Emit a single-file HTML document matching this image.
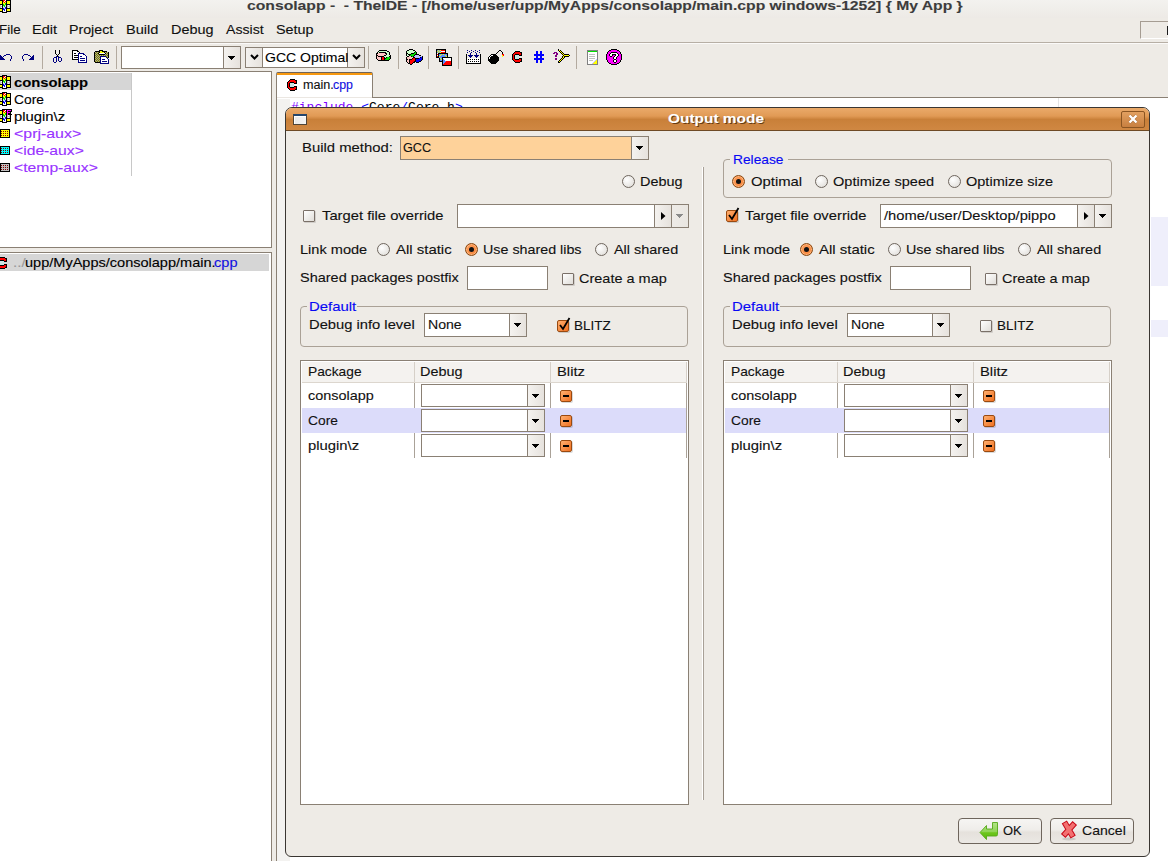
<!DOCTYPE html>
<html><head><meta charset="utf-8"><style>
html,body{margin:0;padding:0}
body{width:1168px;height:861px;overflow:hidden;position:relative;background:#eeebe6;font-family:"Liberation Sans",sans-serif;}
.t{position:absolute;white-space:pre;font-size:14px;line-height:16px;-webkit-text-stroke:0.12px currentColor;}
</style></head><body>

<div style="position:absolute;left:0px;top:0px;width:1168px;height:18px;background:linear-gradient(#f3f2ef,#edeae6)"></div>
<div class="t" style="left:247.39px;top:-2px;color:#3c3c3c;transform:scaleX(1.1632);transform-origin:0 0;font-weight:bold;font-size:13.5px;">consolapp -  - TheIDE - [/home/user/upp/MyApps/consolapp/main.cpp windows-1252] { My App }</div>
<svg style="position:absolute;left:0px;top:-1px" width="11" height="14" shape-rendering="crispEdges"><rect x="2" y="0" width="5" height="1" fill="#000"/><rect x="0" y="1" width="3" height="1" fill="#000"/><rect x="3" y="1" width="2" height="1" fill="#ff0000"/><rect x="5" y="1" width="1" height="1" fill="#fff"/><rect x="6" y="1" width="5" height="1" fill="#000"/><rect x="0" y="2" width="2" height="1" fill="#ffff00"/><rect x="2" y="2" width="1" height="1" fill="#000"/><rect x="3" y="2" width="1" height="1" fill="#ff0000"/><rect x="4" y="2" width="1" height="1" fill="#fff"/><rect x="5" y="2" width="1" height="1" fill="#ff0000"/><rect x="6" y="2" width="1" height="1" fill="#000"/><rect x="7" y="2" width="3" height="1" fill="#ffff00"/><rect x="10" y="2" width="1" height="1" fill="#000"/><rect x="0" y="3" width="2" height="1" fill="#ffff00"/><rect x="2" y="3" width="1" height="1" fill="#000"/><rect x="3" y="3" width="1" height="1" fill="#ffff00"/><rect x="4" y="3" width="1" height="1" fill="#ff0000"/><rect x="5" y="3" width="1" height="1" fill="#ffff00"/><rect x="6" y="3" width="1" height="1" fill="#000"/><rect x="7" y="3" width="3" height="1" fill="#ffff00"/><rect x="10" y="3" width="1" height="1" fill="#000"/><rect x="0" y="4" width="2" height="1" fill="#ffff00"/><rect x="2" y="4" width="1" height="1" fill="#000"/><rect x="3" y="4" width="2" height="1" fill="#ffff00"/><rect x="5" y="4" width="1" height="1" fill="#00e000"/><rect x="6" y="4" width="1" height="1" fill="#000"/><rect x="7" y="4" width="3" height="1" fill="#ffff00"/><rect x="10" y="4" width="1" height="1" fill="#000"/><rect x="0" y="5" width="3" height="1" fill="#000"/><rect x="3" y="5" width="1" height="1" fill="#00e000"/><rect x="4" y="5" width="1" height="1" fill="#ffff00"/><rect x="5" y="5" width="1" height="1" fill="#00e000"/><rect x="6" y="5" width="5" height="1" fill="#000"/><rect x="0" y="6" width="1" height="1" fill="#c0c0c0"/><rect x="1" y="6" width="1" height="1" fill="#fff"/><rect x="2" y="6" width="1" height="1" fill="#000"/><rect x="3" y="6" width="2" height="1" fill="#00e000"/><rect x="5" y="6" width="1" height="1" fill="#c8e4e4"/><rect x="6" y="6" width="1" height="1" fill="#000"/><rect x="7" y="6" width="1" height="1" fill="#c0c0c0"/><rect x="8" y="6" width="1" height="1" fill="#fff"/><rect x="9" y="6" width="1" height="1" fill="#c0c0c0"/><rect x="10" y="6" width="1" height="1" fill="#000"/><rect x="0" y="7" width="2" height="1" fill="#c0c0c0"/><rect x="2" y="7" width="1" height="1" fill="#000"/><rect x="3" y="7" width="1" height="1" fill="#c8e4e4"/><rect x="4" y="7" width="1" height="1" fill="#00e000"/><rect x="5" y="7" width="1" height="1" fill="#c8e4e4"/><rect x="6" y="7" width="1" height="1" fill="#000"/><rect x="7" y="7" width="3" height="1" fill="#c0c0c0"/><rect x="10" y="7" width="1" height="1" fill="#000"/><rect x="0" y="8" width="1" height="1" fill="#c0c0c0"/><rect x="1" y="8" width="1" height="1" fill="#fff"/><rect x="2" y="8" width="1" height="1" fill="#000"/><rect x="3" y="8" width="2" height="1" fill="#c8e4e4"/><rect x="5" y="8" width="1" height="1" fill="#0000ff"/><rect x="6" y="8" width="1" height="1" fill="#000"/><rect x="7" y="8" width="1" height="1" fill="#c0c0c0"/><rect x="8" y="8" width="1" height="1" fill="#fff"/><rect x="9" y="8" width="1" height="1" fill="#c0c0c0"/><rect x="10" y="8" width="1" height="1" fill="#000"/><rect x="0" y="9" width="3" height="1" fill="#000"/><rect x="3" y="9" width="1" height="1" fill="#0000ff"/><rect x="4" y="9" width="1" height="1" fill="#c8e4e4"/><rect x="5" y="9" width="1" height="1" fill="#0000ff"/><rect x="6" y="9" width="5" height="1" fill="#000"/><rect x="0" y="10" width="2" height="1" fill="#ffff00"/><rect x="2" y="10" width="1" height="1" fill="#000"/><rect x="3" y="10" width="2" height="1" fill="#0000ff"/><rect x="5" y="10" width="1" height="1" fill="#fff"/><rect x="6" y="10" width="1" height="1" fill="#000"/><rect x="7" y="10" width="3" height="1" fill="#ffff00"/><rect x="10" y="10" width="1" height="1" fill="#000"/><rect x="0" y="11" width="2" height="1" fill="#ffff00"/><rect x="2" y="11" width="1" height="1" fill="#000"/><rect x="3" y="11" width="1" height="1" fill="#fff"/><rect x="4" y="11" width="1" height="1" fill="#0000ff"/><rect x="5" y="11" width="1" height="1" fill="#fff"/><rect x="6" y="11" width="1" height="1" fill="#000"/><rect x="7" y="11" width="3" height="1" fill="#ffff00"/><rect x="10" y="11" width="1" height="1" fill="#000"/><rect x="0" y="12" width="3" height="1" fill="#000"/><rect x="3" y="12" width="3" height="1" fill="#fff"/><rect x="6" y="12" width="5" height="1" fill="#000"/><rect x="2" y="13" width="5" height="1" fill="#000"/></svg>
<div class="t" style="left:-1.10px;top:22px;color:#101010;transform:scaleX(0.9943);transform-origin:0 0;font-size:13.5px;">File</div>
<div class="t" style="left:31.81px;top:22px;color:#101010;transform:scaleX(1.0765);transform-origin:0 0;font-size:13.5px;">Edit</div>
<div class="t" style="left:68.83px;top:22px;color:#101010;transform:scaleX(1.0527);transform-origin:0 0;font-size:13.5px;">Project</div>
<div class="t" style="left:125.80px;top:22px;color:#101010;transform:scaleX(1.0809);transform-origin:0 0;font-size:13.5px;">Build</div>
<div class="t" style="left:170.82px;top:22px;color:#101010;transform:scaleX(1.0684);transform-origin:0 0;font-size:13.5px;">Debug</div>
<div class="t" style="left:225.97px;top:22px;color:#101010;transform:scaleX(1.0473);transform-origin:0 0;font-size:13.5px;">Assist</div>
<div class="t" style="left:276.35px;top:22px;color:#101010;transform:scaleX(1.0664);transform-origin:0 0;font-size:13.5px;">Setup</div>
<div style="position:absolute;left:0px;top:42px;width:1168px;height:1px;background:#b7afa5"></div>
<div style="position:absolute;left:0px;top:43px;width:1168px;height:1px;background:#fbfaf9"></div>
<div style="position:absolute;left:1140px;top:21px;width:40px;height:18px;border-top:1px solid #a59c92;border-left:1px solid #a59c92;box-sizing:border-box;border-bottom:1px solid #fff"></div>
<div style="position:absolute;left:1167px;top:26px;width:2px;height:9px;background:#1a1a1a"></div>
<div style="position:absolute;left:42px;top:46px;width:1px;height:23px;background:#b3aa9f"></div>
<div style="position:absolute;left:116px;top:46px;width:1px;height:23px;background:#b3aa9f"></div>
<div style="position:absolute;left:368px;top:46px;width:1px;height:23px;background:#b3aa9f"></div>
<div style="position:absolute;left:398px;top:46px;width:1px;height:23px;background:#b3aa9f"></div>
<div style="position:absolute;left:428px;top:46px;width:1px;height:23px;background:#b3aa9f"></div>
<div style="position:absolute;left:458px;top:46px;width:1px;height:23px;background:#b3aa9f"></div>
<div style="position:absolute;left:576px;top:46px;width:1px;height:23px;background:#b3aa9f"></div>
<div style="position:absolute;left:121px;top:46px;width:120px;height:23px;background:#fff;border:1px solid #8a8074;box-sizing:border-box"></div>
<div style="position:absolute;left:223px;top:46px;width:18px;height:23px;background:linear-gradient(90deg,#f4f2ef,#e6e2dd);border:1px solid #8a8074;box-sizing:border-box"></div>
<svg style="position:absolute;left:228px;top:56px" width="7" height="4" shape-rendering="crispEdges"><rect x="0" y="0" width="7" height="1" fill="#000"/><rect x="1" y="1" width="5" height="1" fill="#000"/><rect x="2" y="2" width="3" height="1" fill="#000"/><rect x="3" y="3" width="1" height="1" fill="#000"/></svg>
<div style="position:absolute;left:245px;top:47px;width:120px;height:21px;background:#fff;border:1px solid #8a8074;box-sizing:border-box"></div>
<div style="position:absolute;left:245px;top:47px;width:18px;height:21px;background:linear-gradient(90deg,#f4f2ef,#e6e2dd);border:1px solid #8a8074;box-sizing:border-box"></div>
<div style="position:absolute;left:347px;top:47px;width:18px;height:21px;background:linear-gradient(90deg,#f4f2ef,#e6e2dd);border:1px solid #8a8074;box-sizing:border-box"></div>
<svg style="position:absolute;left:250px;top:53px" width="9" height="8" viewBox="0 0 9 8"><path d="M1 2 L4.5 5.5 L8 2" fill="none" stroke="#000" stroke-width="2"/></svg>
<svg style="position:absolute;left:352px;top:53px" width="9" height="8" viewBox="0 0 9 8"><path d="M1 2 L4.5 5.5 L8 2" fill="none" stroke="#000" stroke-width="2"/></svg>
<div style="position:absolute;left:263px;top:48px;width:85px;height:19px;overflow:hidden">
<div class="t" style="left:2.29px;top:2px;color:#000;transform:scaleX(1.0384);transform-origin:0 0;font-size:13.5px;">GCC Optimal</div>
</div>
<svg style="position:absolute;left:0px;top:54px" width="12" height="7" shape-rendering="crispEdges"><rect x="6" y="0" width="4" height="1" fill="#000080"/><rect x="0" y="1" width="1" height="1" fill="#000080"/><rect x="4" y="1" width="2" height="1" fill="#000080"/><rect x="10" y="1" width="1" height="1" fill="#000080"/><rect x="0" y="2" width="2" height="1" fill="#000080"/><rect x="3" y="2" width="1" height="1" fill="#000080"/><rect x="11" y="2" width="1" height="1" fill="#000080"/><rect x="0" y="3" width="3" height="1" fill="#000080"/><rect x="11" y="3" width="1" height="1" fill="#000080"/><rect x="0" y="4" width="4" height="1" fill="#000080"/><rect x="11" y="4" width="1" height="1" fill="#000080"/><rect x="0" y="5" width="5" height="1" fill="#000080"/><rect x="10" y="5" width="1" height="1" fill="#000080"/><rect x="10" y="6" width="1" height="1" fill="#000080"/></svg>
<svg style="position:absolute;left:22px;top:54px" width="12" height="7" shape-rendering="crispEdges"><rect x="2" y="0" width="4" height="1" fill="#000080"/><rect x="1" y="1" width="1" height="1" fill="#000080"/><rect x="6" y="1" width="2" height="1" fill="#000080"/><rect x="11" y="1" width="1" height="1" fill="#000080"/><rect x="0" y="2" width="1" height="1" fill="#000080"/><rect x="8" y="2" width="1" height="1" fill="#000080"/><rect x="10" y="2" width="2" height="1" fill="#000080"/><rect x="0" y="3" width="1" height="1" fill="#000080"/><rect x="9" y="3" width="3" height="1" fill="#000080"/><rect x="0" y="4" width="1" height="1" fill="#000080"/><rect x="8" y="4" width="4" height="1" fill="#000080"/><rect x="1" y="5" width="1" height="1" fill="#000080"/><rect x="7" y="5" width="5" height="1" fill="#000080"/><rect x="1" y="6" width="1" height="1" fill="#000080"/></svg>
<svg style="position:absolute;left:53px;top:50px" width="9" height="13" shape-rendering="crispEdges"><rect x="2" y="0" width="1" height="1" fill="#000"/><rect x="6" y="0" width="1" height="1" fill="#000"/><rect x="2" y="1" width="1" height="1" fill="#000"/><rect x="6" y="1" width="1" height="1" fill="#000"/><rect x="2" y="2" width="1" height="1" fill="#000"/><rect x="6" y="2" width="1" height="1" fill="#000"/><rect x="2" y="3" width="1" height="1" fill="#000"/><rect x="6" y="3" width="1" height="1" fill="#000"/><rect x="3" y="4" width="1" height="1" fill="#000"/><rect x="5" y="4" width="1" height="1" fill="#000"/><rect x="4" y="5" width="1" height="1" fill="#000"/><rect x="3" y="6" width="1" height="1" fill="#000080"/><rect x="4" y="6" width="1" height="1" fill="#000"/><rect x="5" y="6" width="1" height="1" fill="#000080"/><rect x="1" y="7" width="3" height="1" fill="#000080"/><rect x="5" y="7" width="3" height="1" fill="#000080"/><rect x="0" y="8" width="1" height="1" fill="#000080"/><rect x="3" y="8" width="1" height="1" fill="#000080"/><rect x="5" y="8" width="1" height="1" fill="#000080"/><rect x="8" y="8" width="1" height="1" fill="#000080"/><rect x="0" y="9" width="1" height="1" fill="#000080"/><rect x="3" y="9" width="1" height="1" fill="#000080"/><rect x="5" y="9" width="1" height="1" fill="#000080"/><rect x="8" y="9" width="1" height="1" fill="#000080"/><rect x="0" y="10" width="1" height="1" fill="#000080"/><rect x="3" y="10" width="1" height="1" fill="#000080"/><rect x="5" y="10" width="1" height="1" fill="#000080"/><rect x="8" y="10" width="1" height="1" fill="#000080"/><rect x="0" y="11" width="1" height="1" fill="#000080"/><rect x="3" y="11" width="1" height="1" fill="#000080"/><rect x="6" y="11" width="2" height="1" fill="#000080"/><rect x="1" y="12" width="2" height="1" fill="#000080"/></svg>
<svg style="position:absolute;left:72px;top:50px" width="15" height="13" shape-rendering="crispEdges"><rect x="0" y="0" width="6" height="1" fill="#000"/><rect x="0" y="1" width="1" height="1" fill="#000"/><rect x="1" y="1" width="4" height="1" fill="#fff"/><rect x="5" y="1" width="2" height="1" fill="#000"/><rect x="0" y="2" width="1" height="1" fill="#000"/><rect x="1" y="2" width="6" height="1" fill="#fff"/><rect x="7" y="2" width="1" height="1" fill="#000"/><rect x="0" y="3" width="1" height="1" fill="#000"/><rect x="1" y="3" width="1" height="1" fill="#fff"/><rect x="2" y="3" width="2" height="1" fill="#000"/><rect x="4" y="3" width="2" height="1" fill="#fff"/><rect x="6" y="3" width="6" height="1" fill="#000080"/><rect x="0" y="4" width="1" height="1" fill="#000"/><rect x="1" y="4" width="5" height="1" fill="#fff"/><rect x="6" y="4" width="1" height="1" fill="#000080"/><rect x="7" y="4" width="4" height="1" fill="#fff"/><rect x="11" y="4" width="2" height="1" fill="#000080"/><rect x="0" y="5" width="1" height="1" fill="#000"/><rect x="1" y="5" width="1" height="1" fill="#fff"/><rect x="2" y="5" width="4" height="1" fill="#000"/><rect x="6" y="5" width="1" height="1" fill="#000080"/><rect x="7" y="5" width="6" height="1" fill="#fff"/><rect x="13" y="5" width="1" height="1" fill="#000080"/><rect x="0" y="6" width="1" height="1" fill="#000"/><rect x="1" y="6" width="5" height="1" fill="#fff"/><rect x="6" y="6" width="1" height="1" fill="#000080"/><rect x="7" y="6" width="1" height="1" fill="#fff"/><rect x="8" y="6" width="2" height="1" fill="#000080"/><rect x="10" y="6" width="4" height="1" fill="#fff"/><rect x="14" y="6" width="1" height="1" fill="#000080"/><rect x="0" y="7" width="1" height="1" fill="#000"/><rect x="1" y="7" width="1" height="1" fill="#fff"/><rect x="2" y="7" width="4" height="1" fill="#000"/><rect x="6" y="7" width="1" height="1" fill="#000080"/><rect x="7" y="7" width="7" height="1" fill="#fff"/><rect x="14" y="7" width="1" height="1" fill="#000080"/><rect x="0" y="8" width="1" height="1" fill="#000"/><rect x="1" y="8" width="5" height="1" fill="#fff"/><rect x="6" y="8" width="1" height="1" fill="#000080"/><rect x="7" y="8" width="1" height="1" fill="#fff"/><rect x="8" y="8" width="5" height="1" fill="#000080"/><rect x="13" y="8" width="1" height="1" fill="#fff"/><rect x="14" y="8" width="1" height="1" fill="#000080"/><rect x="0" y="9" width="6" height="1" fill="#000"/><rect x="6" y="9" width="1" height="1" fill="#000080"/><rect x="7" y="9" width="7" height="1" fill="#fff"/><rect x="14" y="9" width="1" height="1" fill="#000080"/><rect x="6" y="10" width="1" height="1" fill="#000080"/><rect x="7" y="10" width="1" height="1" fill="#fff"/><rect x="8" y="10" width="5" height="1" fill="#000080"/><rect x="13" y="10" width="1" height="1" fill="#fff"/><rect x="14" y="10" width="1" height="1" fill="#000080"/><rect x="6" y="11" width="1" height="1" fill="#000080"/><rect x="7" y="11" width="7" height="1" fill="#fff"/><rect x="14" y="11" width="1" height="1" fill="#000080"/><rect x="6" y="12" width="9" height="1" fill="#000080"/></svg>
<svg style="position:absolute;left:94px;top:50px" width="15" height="14" shape-rendering="crispEdges"><rect x="5" y="0" width="4" height="1" fill="#000"/><rect x="1" y="1" width="5" height="1" fill="#000"/><rect x="6" y="1" width="2" height="1" fill="#ffff00"/><rect x="8" y="1" width="5" height="1" fill="#000"/><rect x="0" y="2" width="1" height="1" fill="#000"/><rect x="1" y="2" width="1" height="1" fill="#a8a890"/><rect x="2" y="2" width="1" height="1" fill="#808000"/><rect x="3" y="2" width="1" height="1" fill="#a8a890"/><rect x="4" y="2" width="1" height="1" fill="#808000"/><rect x="5" y="2" width="1" height="1" fill="#000"/><rect x="6" y="2" width="4" height="1" fill="#ffff00"/><rect x="10" y="2" width="1" height="1" fill="#000"/><rect x="11" y="2" width="1" height="1" fill="#a8a890"/><rect x="12" y="2" width="1" height="1" fill="#808000"/><rect x="13" y="2" width="1" height="1" fill="#a8a890"/><rect x="14" y="2" width="1" height="1" fill="#000"/><rect x="0" y="3" width="1" height="1" fill="#000"/><rect x="1" y="3" width="1" height="1" fill="#808000"/><rect x="2" y="3" width="1" height="1" fill="#a8a890"/><rect x="3" y="3" width="1" height="1" fill="#808000"/><rect x="4" y="3" width="1" height="1" fill="#000"/><rect x="5" y="3" width="6" height="1" fill="#fff"/><rect x="11" y="3" width="1" height="1" fill="#000"/><rect x="12" y="3" width="1" height="1" fill="#a8a890"/><rect x="13" y="3" width="1" height="1" fill="#808000"/><rect x="14" y="3" width="1" height="1" fill="#000"/><rect x="0" y="4" width="1" height="1" fill="#000"/><rect x="1" y="4" width="1" height="1" fill="#a8a890"/><rect x="2" y="4" width="1" height="1" fill="#808000"/><rect x="3" y="4" width="1" height="1" fill="#a8a890"/><rect x="4" y="4" width="1" height="1" fill="#808000"/><rect x="5" y="4" width="6" height="1" fill="#000"/><rect x="11" y="4" width="1" height="1" fill="#a8a890"/><rect x="12" y="4" width="1" height="1" fill="#808000"/><rect x="13" y="4" width="1" height="1" fill="#a8a890"/><rect x="14" y="4" width="1" height="1" fill="#000"/><rect x="0" y="5" width="1" height="1" fill="#000"/><rect x="1" y="5" width="1" height="1" fill="#808000"/><rect x="2" y="5" width="1" height="1" fill="#a8a890"/><rect x="3" y="5" width="1" height="1" fill="#808000"/><rect x="4" y="5" width="1" height="1" fill="#a8a890"/><rect x="5" y="5" width="1" height="1" fill="#808000"/><rect x="6" y="5" width="1" height="1" fill="#a8a890"/><rect x="7" y="5" width="1" height="1" fill="#808000"/><rect x="8" y="5" width="1" height="1" fill="#a8a890"/><rect x="9" y="5" width="1" height="1" fill="#808000"/><rect x="10" y="5" width="1" height="1" fill="#a8a890"/><rect x="11" y="5" width="1" height="1" fill="#808000"/><rect x="12" y="5" width="1" height="1" fill="#a8a890"/><rect x="13" y="5" width="1" height="1" fill="#808000"/><rect x="14" y="5" width="1" height="1" fill="#000"/><rect x="0" y="6" width="1" height="1" fill="#000"/><rect x="1" y="6" width="1" height="1" fill="#a8a890"/><rect x="2" y="6" width="1" height="1" fill="#808000"/><rect x="3" y="6" width="1" height="1" fill="#a8a890"/><rect x="4" y="6" width="1" height="1" fill="#808000"/><rect x="5" y="6" width="1" height="1" fill="#a8a890"/><rect x="6" y="6" width="6" height="1" fill="#000080"/><rect x="12" y="6" width="1" height="1" fill="#808000"/><rect x="13" y="6" width="1" height="1" fill="#a8a890"/><rect x="14" y="6" width="1" height="1" fill="#000"/><rect x="0" y="7" width="1" height="1" fill="#000"/><rect x="1" y="7" width="1" height="1" fill="#808000"/><rect x="2" y="7" width="1" height="1" fill="#a8a890"/><rect x="3" y="7" width="1" height="1" fill="#808000"/><rect x="4" y="7" width="1" height="1" fill="#a8a890"/><rect x="5" y="7" width="1" height="1" fill="#808000"/><rect x="6" y="7" width="1" height="1" fill="#000080"/><rect x="7" y="7" width="5" height="1" fill="#fff"/><rect x="12" y="7" width="1" height="1" fill="#000080"/><rect x="13" y="7" width="1" height="1" fill="#808000"/><rect x="14" y="7" width="1" height="1" fill="#000"/><rect x="0" y="8" width="1" height="1" fill="#000"/><rect x="1" y="8" width="1" height="1" fill="#a8a890"/><rect x="2" y="8" width="1" height="1" fill="#808000"/><rect x="3" y="8" width="1" height="1" fill="#a8a890"/><rect x="4" y="8" width="1" height="1" fill="#808000"/><rect x="5" y="8" width="1" height="1" fill="#a8a890"/><rect x="6" y="8" width="1" height="1" fill="#000080"/><rect x="7" y="8" width="6" height="1" fill="#fff"/><rect x="13" y="8" width="1" height="1" fill="#000080"/><rect x="0" y="9" width="1" height="1" fill="#000"/><rect x="1" y="9" width="1" height="1" fill="#808000"/><rect x="2" y="9" width="1" height="1" fill="#a8a890"/><rect x="3" y="9" width="1" height="1" fill="#808000"/><rect x="4" y="9" width="1" height="1" fill="#a8a890"/><rect x="5" y="9" width="1" height="1" fill="#808000"/><rect x="6" y="9" width="1" height="1" fill="#000080"/><rect x="7" y="9" width="1" height="1" fill="#fff"/><rect x="8" y="9" width="3" height="1" fill="#000080"/><rect x="11" y="9" width="3" height="1" fill="#fff"/><rect x="14" y="9" width="1" height="1" fill="#000080"/><rect x="0" y="10" width="1" height="1" fill="#000"/><rect x="1" y="10" width="1" height="1" fill="#a8a890"/><rect x="2" y="10" width="1" height="1" fill="#808000"/><rect x="3" y="10" width="1" height="1" fill="#a8a890"/><rect x="4" y="10" width="1" height="1" fill="#808000"/><rect x="5" y="10" width="1" height="1" fill="#a8a890"/><rect x="6" y="10" width="1" height="1" fill="#000080"/><rect x="7" y="10" width="7" height="1" fill="#fff"/><rect x="14" y="10" width="1" height="1" fill="#000080"/><rect x="0" y="11" width="1" height="1" fill="#000"/><rect x="1" y="11" width="1" height="1" fill="#808000"/><rect x="2" y="11" width="1" height="1" fill="#a8a890"/><rect x="3" y="11" width="1" height="1" fill="#808000"/><rect x="4" y="11" width="1" height="1" fill="#a8a890"/><rect x="5" y="11" width="1" height="1" fill="#808000"/><rect x="6" y="11" width="1" height="1" fill="#000080"/><rect x="7" y="11" width="1" height="1" fill="#fff"/><rect x="8" y="11" width="5" height="1" fill="#000080"/><rect x="13" y="11" width="1" height="1" fill="#fff"/><rect x="14" y="11" width="1" height="1" fill="#000080"/><rect x="1" y="12" width="5" height="1" fill="#000"/><rect x="6" y="12" width="1" height="1" fill="#000080"/><rect x="7" y="12" width="7" height="1" fill="#fff"/><rect x="14" y="12" width="1" height="1" fill="#000080"/><rect x="6" y="13" width="9" height="1" fill="#000080"/></svg>
<svg style="position:absolute;left:376px;top:50px" width="16" height="11" shape-rendering="crispEdges"><rect x="3" y="0" width="8" height="1" fill="#000"/><rect x="2" y="1" width="1" height="1" fill="#000"/><rect x="3" y="1" width="8" height="1" fill="#ccffcc"/><rect x="11" y="1" width="2" height="1" fill="#000"/><rect x="1" y="2" width="1" height="1" fill="#000"/><rect x="2" y="2" width="1" height="1" fill="#ccffcc"/><rect x="3" y="2" width="7" height="1" fill="#000"/><rect x="10" y="2" width="3" height="1" fill="#ccffcc"/><rect x="13" y="2" width="1" height="1" fill="#000"/><rect x="0" y="3" width="2" height="1" fill="#000"/><rect x="2" y="3" width="7" height="1" fill="#ffc4c4"/><rect x="9" y="3" width="2" height="1" fill="#000"/><rect x="11" y="3" width="2" height="1" fill="#ccffcc"/><rect x="13" y="3" width="1" height="1" fill="#000"/><rect x="0" y="4" width="1" height="1" fill="#000"/><rect x="1" y="4" width="9" height="1" fill="#ffc4c4"/><rect x="10" y="4" width="1" height="1" fill="#000"/><rect x="11" y="4" width="2" height="1" fill="#ccffcc"/><rect x="13" y="4" width="1" height="1" fill="#000"/><rect x="0" y="5" width="2" height="1" fill="#000"/><rect x="2" y="5" width="6" height="1" fill="#ffc4c4"/><rect x="8" y="5" width="2" height="1" fill="#000"/><rect x="10" y="5" width="4" height="1" fill="#ccffcc"/><rect x="14" y="5" width="1" height="1" fill="#000"/><rect x="0" y="6" width="1" height="1" fill="#000"/><rect x="1" y="6" width="1" height="1" fill="#ffc4c4"/><rect x="2" y="6" width="6" height="1" fill="#000"/><rect x="8" y="6" width="5" height="1" fill="#ccffcc"/><rect x="13" y="6" width="2" height="1" fill="#000"/><rect x="0" y="7" width="1" height="1" fill="#000"/><rect x="1" y="7" width="4" height="1" fill="#ffc4c4"/><rect x="5" y="7" width="1" height="1" fill="#000"/><rect x="6" y="7" width="2" height="1" fill="#ff0000"/><rect x="8" y="7" width="1" height="1" fill="#000"/><rect x="9" y="7" width="1" height="1" fill="#ccffcc"/><rect x="10" y="7" width="1" height="1" fill="#000"/><rect x="11" y="7" width="3" height="1" fill="#00e000"/><rect x="14" y="7" width="1" height="1" fill="#000"/><rect x="0" y="8" width="1" height="1" fill="#000"/><rect x="1" y="8" width="4" height="1" fill="#ffc4c4"/><rect x="5" y="8" width="1" height="1" fill="#000"/><rect x="6" y="8" width="2" height="1" fill="#ff0000"/><rect x="8" y="8" width="2" height="1" fill="#000"/><rect x="10" y="8" width="4" height="1" fill="#00e000"/><rect x="14" y="8" width="1" height="1" fill="#000"/><rect x="1" y="9" width="1" height="1" fill="#000"/><rect x="2" y="9" width="3" height="1" fill="#ffc4c4"/><rect x="5" y="9" width="1" height="1" fill="#000"/><rect x="6" y="9" width="2" height="1" fill="#ff0000"/><rect x="8" y="9" width="1" height="1" fill="#000"/><rect x="9" y="9" width="4" height="1" fill="#00e000"/><rect x="13" y="9" width="1" height="1" fill="#000"/><rect x="2" y="10" width="11" height="1" fill="#000"/></svg>
<svg style="position:absolute;left:406px;top:49px" width="17" height="16" shape-rendering="crispEdges"><rect x="3" y="0" width="4" height="1" fill="#000"/><rect x="1" y="1" width="2" height="1" fill="#000"/><rect x="3" y="1" width="4" height="1" fill="#ccffcc"/><rect x="7" y="1" width="2" height="1" fill="#000"/><rect x="0" y="2" width="1" height="1" fill="#000"/><rect x="1" y="2" width="8" height="1" fill="#ccffcc"/><rect x="9" y="2" width="1" height="1" fill="#000"/><rect x="0" y="3" width="1" height="1" fill="#000"/><rect x="1" y="3" width="7" height="1" fill="#ccffcc"/><rect x="8" y="3" width="1" height="1" fill="#000"/><rect x="9" y="3" width="1" height="1" fill="#00e000"/><rect x="10" y="3" width="1" height="1" fill="#000"/><rect x="0" y="4" width="2" height="1" fill="#000"/><rect x="2" y="4" width="3" height="1" fill="#ccffcc"/><rect x="5" y="4" width="3" height="1" fill="#000"/><rect x="8" y="4" width="2" height="1" fill="#00e000"/><rect x="10" y="4" width="1" height="1" fill="#000"/><rect x="0" y="5" width="1" height="1" fill="#000"/><rect x="1" y="5" width="1" height="1" fill="#ccffcc"/><rect x="2" y="5" width="3" height="1" fill="#000"/><rect x="5" y="5" width="4" height="1" fill="#00e000"/><rect x="9" y="5" width="4" height="1" fill="#000"/><rect x="0" y="6" width="1" height="1" fill="#000"/><rect x="1" y="6" width="2" height="1" fill="#ccffcc"/><rect x="3" y="6" width="1" height="1" fill="#000"/><rect x="4" y="6" width="4" height="1" fill="#00e000"/><rect x="8" y="6" width="1" height="1" fill="#000"/><rect x="9" y="6" width="4" height="1" fill="#c0c0ff"/><rect x="13" y="6" width="2" height="1" fill="#000"/><rect x="1" y="7" width="2" height="1" fill="#000"/><rect x="3" y="7" width="2" height="1" fill="#ffc4c4"/><rect x="5" y="7" width="1" height="1" fill="#000"/><rect x="6" y="7" width="1" height="1" fill="#00e000"/><rect x="7" y="7" width="1" height="1" fill="#000"/><rect x="8" y="7" width="8" height="1" fill="#c0c0ff"/><rect x="16" y="7" width="1" height="1" fill="#000"/><rect x="0" y="8" width="1" height="1" fill="#000"/><rect x="1" y="8" width="6" height="1" fill="#ffc4c4"/><rect x="7" y="8" width="2" height="1" fill="#000"/><rect x="9" y="8" width="5" height="1" fill="#c0c0ff"/><rect x="14" y="8" width="1" height="1" fill="#000"/><rect x="15" y="8" width="1" height="1" fill="#0000ff"/><rect x="16" y="8" width="1" height="1" fill="#000"/><rect x="0" y="9" width="1" height="1" fill="#000"/><rect x="1" y="9" width="5" height="1" fill="#ffc4c4"/><rect x="6" y="9" width="1" height="1" fill="#000"/><rect x="7" y="9" width="2" height="1" fill="#ff0000"/><rect x="9" y="9" width="4" height="1" fill="#000"/><rect x="13" y="9" width="3" height="1" fill="#0000ff"/><rect x="16" y="9" width="1" height="1" fill="#000"/><rect x="0" y="10" width="2" height="1" fill="#000"/><rect x="2" y="10" width="1" height="1" fill="#ffc4c4"/><rect x="3" y="10" width="3" height="1" fill="#000"/><rect x="6" y="10" width="3" height="1" fill="#ff0000"/><rect x="9" y="10" width="1" height="1" fill="#000"/><rect x="10" y="10" width="6" height="1" fill="#0000ff"/><rect x="16" y="10" width="1" height="1" fill="#000"/><rect x="0" y="11" width="1" height="1" fill="#000"/><rect x="1" y="11" width="2" height="1" fill="#ffc4c4"/><rect x="3" y="11" width="1" height="1" fill="#000"/><rect x="4" y="11" width="5" height="1" fill="#ff0000"/><rect x="9" y="11" width="1" height="1" fill="#000"/><rect x="10" y="11" width="5" height="1" fill="#0000ff"/><rect x="15" y="11" width="1" height="1" fill="#000"/><rect x="0" y="12" width="1" height="1" fill="#000"/><rect x="1" y="12" width="2" height="1" fill="#ffc4c4"/><rect x="3" y="12" width="1" height="1" fill="#000"/><rect x="4" y="12" width="4" height="1" fill="#ff0000"/><rect x="8" y="12" width="2" height="1" fill="#000"/><rect x="10" y="12" width="3" height="1" fill="#0000ff"/><rect x="13" y="12" width="2" height="1" fill="#000"/><rect x="1" y="13" width="1" height="1" fill="#000"/><rect x="2" y="13" width="1" height="1" fill="#ffc4c4"/><rect x="3" y="13" width="1" height="1" fill="#000"/><rect x="4" y="13" width="3" height="1" fill="#ff0000"/><rect x="7" y="13" width="2" height="1" fill="#000"/><rect x="10" y="13" width="3" height="1" fill="#000"/><rect x="2" y="14" width="2" height="1" fill="#000"/><rect x="4" y="14" width="2" height="1" fill="#ff0000"/><rect x="6" y="14" width="1" height="1" fill="#000"/><rect x="4" y="15" width="2" height="1" fill="#000"/></svg>
<svg style="position:absolute;left:436px;top:49px" width="16" height="17" shape-rendering="crispEdges"><rect x="0" y="0" width="10" height="1" fill="#000"/><rect x="0" y="1" width="1" height="1" fill="#000"/><rect x="1" y="1" width="1" height="1" fill="#5a8cff"/><rect x="2" y="1" width="1" height="1" fill="#ffff00"/><rect x="3" y="1" width="1" height="1" fill="#5a8cff"/><rect x="4" y="1" width="1" height="1" fill="#ffff00"/><rect x="5" y="1" width="4" height="1" fill="#ff0000"/><rect x="9" y="1" width="1" height="1" fill="#000"/><rect x="0" y="2" width="1" height="1" fill="#000"/><rect x="1" y="2" width="1" height="1" fill="#ffff00"/><rect x="2" y="2" width="1" height="1" fill="#5a8cff"/><rect x="3" y="2" width="1" height="1" fill="#ffff00"/><rect x="4" y="2" width="1" height="1" fill="#5a8cff"/><rect x="5" y="2" width="4" height="1" fill="#fff"/><rect x="9" y="2" width="1" height="1" fill="#000"/><rect x="0" y="3" width="1" height="1" fill="#000"/><rect x="1" y="3" width="1" height="1" fill="#5a8cff"/><rect x="2" y="3" width="1" height="1" fill="#ffff00"/><rect x="3" y="3" width="1" height="1" fill="#5a8cff"/><rect x="4" y="3" width="1" height="1" fill="#ffff00"/><rect x="5" y="3" width="4" height="1" fill="#ff0000"/><rect x="9" y="3" width="1" height="1" fill="#000"/><rect x="0" y="4" width="1" height="1" fill="#000"/><rect x="1" y="4" width="1" height="1" fill="#fff"/><rect x="2" y="4" width="10" height="1" fill="#000"/><rect x="0" y="5" width="1" height="1" fill="#000"/><rect x="1" y="5" width="1" height="1" fill="#ff0000"/><rect x="2" y="5" width="1" height="1" fill="#000"/><rect x="3" y="5" width="2" height="1" fill="#5a8cff"/><rect x="5" y="5" width="1" height="1" fill="#ffff00"/><rect x="6" y="5" width="1" height="1" fill="#5a8cff"/><rect x="7" y="5" width="1" height="1" fill="#ffff00"/><rect x="8" y="5" width="3" height="1" fill="#5a8cff"/><rect x="11" y="5" width="1" height="1" fill="#000"/><rect x="0" y="6" width="1" height="1" fill="#000"/><rect x="1" y="6" width="1" height="1" fill="#fff"/><rect x="2" y="6" width="1" height="1" fill="#000"/><rect x="3" y="6" width="1" height="1" fill="#5a8cff"/><rect x="4" y="6" width="1" height="1" fill="#ffff00"/><rect x="5" y="6" width="4" height="1" fill="#5a8cff"/><rect x="9" y="6" width="1" height="1" fill="#ffff00"/><rect x="10" y="6" width="1" height="1" fill="#5a8cff"/><rect x="11" y="6" width="1" height="1" fill="#000"/><rect x="0" y="7" width="1" height="1" fill="#000"/><rect x="1" y="7" width="1" height="1" fill="#ff0000"/><rect x="2" y="7" width="1" height="1" fill="#000"/><rect x="3" y="7" width="1" height="1" fill="#ffff00"/><rect x="4" y="7" width="6" height="1" fill="#5a8cff"/><rect x="10" y="7" width="1" height="1" fill="#ffff00"/><rect x="11" y="7" width="1" height="1" fill="#000"/><rect x="0" y="8" width="3" height="1" fill="#000"/><rect x="3" y="8" width="3" height="1" fill="#5a8cff"/><rect x="6" y="8" width="10" height="1" fill="#000"/><rect x="3" y="9" width="1" height="1" fill="#000"/><rect x="4" y="9" width="1" height="1" fill="#ffff00"/><rect x="5" y="9" width="1" height="1" fill="#5a8cff"/><rect x="6" y="9" width="1" height="1" fill="#000"/><rect x="7" y="9" width="8" height="1" fill="#fff"/><rect x="15" y="9" width="1" height="1" fill="#000"/><rect x="3" y="10" width="1" height="1" fill="#000"/><rect x="4" y="10" width="1" height="1" fill="#5a8cff"/><rect x="5" y="10" width="1" height="1" fill="#ffff00"/><rect x="6" y="10" width="1" height="1" fill="#000"/><rect x="7" y="10" width="1" height="1" fill="#5a8cff"/><rect x="8" y="10" width="7" height="1" fill="#fff"/><rect x="15" y="10" width="1" height="1" fill="#000"/><rect x="3" y="11" width="1" height="1" fill="#000"/><rect x="4" y="11" width="2" height="1" fill="#5a8cff"/><rect x="6" y="11" width="1" height="1" fill="#000"/><rect x="7" y="11" width="2" height="1" fill="#5a8cff"/><rect x="9" y="11" width="6" height="1" fill="#fff"/><rect x="15" y="11" width="1" height="1" fill="#000"/><rect x="3" y="12" width="4" height="1" fill="#000"/><rect x="7" y="12" width="3" height="1" fill="#5a8cff"/><rect x="10" y="12" width="5" height="1" fill="#ff0000"/><rect x="15" y="12" width="1" height="1" fill="#000"/><rect x="6" y="13" width="1" height="1" fill="#000"/><rect x="7" y="13" width="2" height="1" fill="#5a8cff"/><rect x="9" y="13" width="6" height="1" fill="#ff0000"/><rect x="15" y="13" width="1" height="1" fill="#000"/><rect x="6" y="14" width="1" height="1" fill="#000"/><rect x="7" y="14" width="1" height="1" fill="#5a8cff"/><rect x="8" y="14" width="7" height="1" fill="#ff0000"/><rect x="15" y="14" width="1" height="1" fill="#000"/><rect x="6" y="15" width="1" height="1" fill="#000"/><rect x="7" y="15" width="8" height="1" fill="#ff0000"/><rect x="15" y="15" width="1" height="1" fill="#000"/><rect x="6" y="16" width="10" height="1" fill="#000"/></svg>
<svg style="position:absolute;left:466px;top:50px" width="16" height="14" shape-rendering="crispEdges"><rect x="1" y="0" width="1" height="1" fill="#000080"/><rect x="5" y="0" width="1" height="1" fill="#000080"/><rect x="9" y="0" width="1" height="1" fill="#000080"/><rect x="13" y="0" width="1" height="1" fill="#000080"/><rect x="3" y="1" width="1" height="1" fill="#000080"/><rect x="7" y="1" width="1" height="1" fill="#000080"/><rect x="11" y="1" width="1" height="1" fill="#000080"/><rect x="1" y="2" width="1" height="1" fill="#000080"/><rect x="5" y="2" width="1" height="1" fill="#000080"/><rect x="9" y="2" width="1" height="1" fill="#000080"/><rect x="13" y="2" width="1" height="1" fill="#000080"/><rect x="4" y="3" width="1" height="1" fill="#000080"/><rect x="10" y="3" width="1" height="1" fill="#000080"/><rect x="0" y="4" width="1" height="1" fill="#000"/><rect x="4" y="4" width="1" height="1" fill="#000080"/><rect x="10" y="4" width="1" height="1" fill="#000080"/><rect x="14" y="4" width="1" height="1" fill="#000"/><rect x="0" y="5" width="1" height="1" fill="#000"/><rect x="2" y="5" width="5" height="1" fill="#000080"/><rect x="8" y="5" width="5" height="1" fill="#000080"/><rect x="14" y="5" width="1" height="1" fill="#000"/><rect x="0" y="6" width="1" height="1" fill="#000"/><rect x="3" y="6" width="3" height="1" fill="#000080"/><rect x="9" y="6" width="3" height="1" fill="#000080"/><rect x="14" y="6" width="1" height="1" fill="#000"/><rect x="0" y="7" width="1" height="1" fill="#000"/><rect x="4" y="7" width="1" height="1" fill="#000080"/><rect x="10" y="7" width="1" height="1" fill="#000080"/><rect x="14" y="7" width="1" height="1" fill="#000"/><rect x="0" y="8" width="1" height="1" fill="#000"/><rect x="1" y="8" width="13" height="1" fill="#fff"/><rect x="14" y="8" width="1" height="1" fill="#000"/><rect x="0" y="9" width="1" height="1" fill="#000"/><rect x="1" y="9" width="1" height="1" fill="#fff"/><rect x="2" y="9" width="1" height="1" fill="#000"/><rect x="3" y="9" width="1" height="1" fill="#fff"/><rect x="4" y="9" width="1" height="1" fill="#000"/><rect x="5" y="9" width="1" height="1" fill="#fff"/><rect x="6" y="9" width="1" height="1" fill="#000"/><rect x="7" y="9" width="1" height="1" fill="#fff"/><rect x="8" y="9" width="1" height="1" fill="#000"/><rect x="9" y="9" width="1" height="1" fill="#fff"/><rect x="10" y="9" width="1" height="1" fill="#000"/><rect x="11" y="9" width="1" height="1" fill="#fff"/><rect x="12" y="9" width="1" height="1" fill="#000"/><rect x="13" y="9" width="1" height="1" fill="#fff"/><rect x="14" y="9" width="1" height="1" fill="#000"/><rect x="0" y="10" width="1" height="1" fill="#000"/><rect x="1" y="10" width="13" height="1" fill="#fff"/><rect x="14" y="10" width="1" height="1" fill="#000"/><rect x="0" y="11" width="1" height="1" fill="#000"/><rect x="1" y="11" width="1" height="1" fill="#fff"/><rect x="2" y="11" width="1" height="1" fill="#000"/><rect x="3" y="11" width="1" height="1" fill="#fff"/><rect x="4" y="11" width="1" height="1" fill="#000"/><rect x="5" y="11" width="1" height="1" fill="#fff"/><rect x="6" y="11" width="1" height="1" fill="#000"/><rect x="7" y="11" width="1" height="1" fill="#fff"/><rect x="8" y="11" width="1" height="1" fill="#000"/><rect x="9" y="11" width="1" height="1" fill="#fff"/><rect x="10" y="11" width="1" height="1" fill="#000"/><rect x="11" y="11" width="1" height="1" fill="#fff"/><rect x="12" y="11" width="1" height="1" fill="#000"/><rect x="13" y="11" width="1" height="1" fill="#fff"/><rect x="14" y="11" width="1" height="1" fill="#000"/><rect x="0" y="12" width="1" height="1" fill="#000"/><rect x="1" y="12" width="13" height="1" fill="#fff"/><rect x="14" y="12" width="1" height="1" fill="#000"/><rect x="0" y="13" width="15" height="1" fill="#000"/></svg>
<svg style="position:absolute;left:488px;top:50px" width="16" height="14" shape-rendering="crispEdges"><rect x="11" y="0" width="2" height="1" fill="#000"/><rect x="10" y="1" width="1" height="1" fill="#000"/><rect x="13" y="1" width="1" height="1" fill="#000"/><rect x="9" y="2" width="1" height="1" fill="#000"/><rect x="14" y="2" width="1" height="1" fill="#000"/><rect x="8" y="3" width="1" height="1" fill="#000"/><rect x="14" y="3" width="1" height="1" fill="#000"/><rect x="3" y="4" width="5" height="1" fill="#000"/><rect x="14" y="4" width="2" height="1" fill="#ff0000"/><rect x="2" y="5" width="1" height="1" fill="#000"/><rect x="3" y="5" width="2" height="1" fill="#fff"/><rect x="5" y="5" width="4" height="1" fill="#000"/><rect x="14" y="5" width="1" height="1" fill="#ffff00"/><rect x="15" y="5" width="1" height="1" fill="#ff0000"/><rect x="1" y="6" width="1" height="1" fill="#000"/><rect x="2" y="6" width="1" height="1" fill="#fff"/><rect x="3" y="6" width="7" height="1" fill="#000"/><rect x="14" y="6" width="1" height="1" fill="#ffff00"/><rect x="0" y="7" width="1" height="1" fill="#000"/><rect x="1" y="7" width="1" height="1" fill="#fff"/><rect x="2" y="7" width="9" height="1" fill="#000"/><rect x="0" y="8" width="1" height="1" fill="#000"/><rect x="1" y="8" width="1" height="1" fill="#fff"/><rect x="2" y="8" width="9" height="1" fill="#000"/><rect x="0" y="9" width="11" height="1" fill="#000"/><rect x="0" y="10" width="11" height="1" fill="#000"/><rect x="1" y="11" width="9" height="1" fill="#000"/><rect x="2" y="12" width="7" height="1" fill="#000"/><rect x="3" y="13" width="5" height="1" fill="#000"/></svg>
<svg style="position:absolute;left:512px;top:51px" width="12" height="12" shape-rendering="crispEdges"><rect x="3" y="0" width="5" height="1" fill="#000"/><rect x="2" y="1" width="1" height="1" fill="#000"/><rect x="3" y="1" width="5" height="1" fill="#ff0000"/><rect x="8" y="1" width="2" height="1" fill="#000"/><rect x="1" y="2" width="1" height="1" fill="#000"/><rect x="2" y="2" width="7" height="1" fill="#ff0000"/><rect x="9" y="2" width="1" height="1" fill="#000"/><rect x="0" y="3" width="1" height="1" fill="#000"/><rect x="1" y="3" width="2" height="1" fill="#ff0000"/><rect x="3" y="3" width="4" height="1" fill="#000"/><rect x="7" y="3" width="2" height="1" fill="#ff0000"/><rect x="9" y="3" width="1" height="1" fill="#000"/><rect x="0" y="4" width="1" height="1" fill="#000"/><rect x="1" y="4" width="1" height="1" fill="#ff0000"/><rect x="2" y="4" width="1" height="1" fill="#000"/><rect x="3" y="4" width="4" height="1" fill="#c8e4e4"/><rect x="7" y="4" width="3" height="1" fill="#000"/><rect x="0" y="5" width="1" height="1" fill="#000"/><rect x="1" y="5" width="1" height="1" fill="#ff0000"/><rect x="2" y="5" width="1" height="1" fill="#000"/><rect x="3" y="5" width="4" height="1" fill="#c8e4e4"/><rect x="0" y="6" width="1" height="1" fill="#000"/><rect x="1" y="6" width="1" height="1" fill="#ff0000"/><rect x="2" y="6" width="1" height="1" fill="#000"/><rect x="3" y="6" width="4" height="1" fill="#c8e4e4"/><rect x="0" y="7" width="1" height="1" fill="#000"/><rect x="1" y="7" width="1" height="1" fill="#ff0000"/><rect x="2" y="7" width="1" height="1" fill="#000"/><rect x="3" y="7" width="4" height="1" fill="#c8e4e4"/><rect x="7" y="7" width="3" height="1" fill="#000"/><rect x="0" y="8" width="1" height="1" fill="#000"/><rect x="1" y="8" width="2" height="1" fill="#ff0000"/><rect x="3" y="8" width="4" height="1" fill="#000"/><rect x="7" y="8" width="2" height="1" fill="#ff0000"/><rect x="9" y="8" width="1" height="1" fill="#000"/><rect x="1" y="9" width="1" height="1" fill="#000"/><rect x="2" y="9" width="7" height="1" fill="#ff0000"/><rect x="9" y="9" width="1" height="1" fill="#000"/><rect x="2" y="10" width="1" height="1" fill="#000"/><rect x="3" y="10" width="5" height="1" fill="#ff0000"/><rect x="8" y="10" width="2" height="1" fill="#000"/><rect x="3" y="11" width="5" height="1" fill="#000"/></svg>
<svg style="position:absolute;left:534px;top:51px" width="10" height="12" shape-rendering="crispEdges"><rect x="2" y="0" width="2" height="1" fill="#0000ff"/><rect x="6" y="0" width="2" height="1" fill="#0000ff"/><rect x="2" y="1" width="2" height="1" fill="#0000ff"/><rect x="6" y="1" width="2" height="1" fill="#0000ff"/><rect x="2" y="2" width="2" height="1" fill="#0000ff"/><rect x="6" y="2" width="2" height="1" fill="#0000ff"/><rect x="0" y="3" width="10" height="1" fill="#0000ff"/><rect x="0" y="4" width="10" height="1" fill="#0000ff"/><rect x="2" y="5" width="2" height="1" fill="#0000ff"/><rect x="6" y="5" width="2" height="1" fill="#0000ff"/><rect x="2" y="6" width="2" height="1" fill="#0000ff"/><rect x="6" y="6" width="2" height="1" fill="#0000ff"/><rect x="0" y="7" width="10" height="1" fill="#0000ff"/><rect x="0" y="8" width="10" height="1" fill="#0000ff"/><rect x="2" y="9" width="2" height="1" fill="#0000ff"/><rect x="6" y="9" width="2" height="1" fill="#0000ff"/><rect x="2" y="10" width="2" height="1" fill="#0000ff"/><rect x="6" y="10" width="2" height="1" fill="#0000ff"/><rect x="2" y="11" width="2" height="1" fill="#0000ff"/><rect x="6" y="11" width="2" height="1" fill="#0000ff"/></svg>
<svg style="position:absolute;left:553px;top:49px" width="17" height="14" shape-rendering="crispEdges"><rect x="5" y="0" width="1" height="1" fill="#000"/><rect x="5" y="1" width="1" height="1" fill="#000"/><rect x="6" y="1" width="1" height="1" fill="#ffff00"/><rect x="7" y="1" width="1" height="1" fill="#000"/><rect x="6" y="2" width="1" height="1" fill="#000"/><rect x="7" y="2" width="1" height="1" fill="#ffff00"/><rect x="8" y="2" width="1" height="1" fill="#000"/><rect x="1" y="3" width="3" height="1" fill="#800080"/><rect x="7" y="3" width="1" height="1" fill="#000"/><rect x="8" y="3" width="1" height="1" fill="#ffff00"/><rect x="9" y="3" width="1" height="1" fill="#000"/><rect x="0" y="4" width="2" height="1" fill="#800080"/><rect x="3" y="4" width="2" height="1" fill="#800080"/><rect x="8" y="4" width="1" height="1" fill="#000"/><rect x="9" y="4" width="1" height="1" fill="#ffff00"/><rect x="10" y="4" width="1" height="1" fill="#000"/><rect x="3" y="5" width="2" height="1" fill="#800080"/><rect x="9" y="5" width="1" height="1" fill="#000"/><rect x="10" y="5" width="1" height="1" fill="#ffff00"/><rect x="11" y="5" width="5" height="1" fill="#000"/><rect x="2" y="6" width="2" height="1" fill="#800080"/><rect x="10" y="6" width="1" height="1" fill="#000"/><rect x="11" y="6" width="5" height="1" fill="#ffff00"/><rect x="16" y="6" width="1" height="1" fill="#000"/><rect x="2" y="7" width="2" height="1" fill="#800080"/><rect x="9" y="7" width="1" height="1" fill="#000"/><rect x="10" y="7" width="1" height="1" fill="#ffff00"/><rect x="11" y="7" width="5" height="1" fill="#000"/><rect x="9" y="8" width="1" height="1" fill="#000"/><rect x="10" y="8" width="1" height="1" fill="#ffff00"/><rect x="11" y="8" width="1" height="1" fill="#000"/><rect x="2" y="9" width="2" height="1" fill="#800080"/><rect x="8" y="9" width="1" height="1" fill="#000"/><rect x="9" y="9" width="1" height="1" fill="#ffff00"/><rect x="10" y="9" width="1" height="1" fill="#000"/><rect x="2" y="10" width="2" height="1" fill="#800080"/><rect x="7" y="10" width="1" height="1" fill="#000"/><rect x="8" y="10" width="1" height="1" fill="#ffff00"/><rect x="9" y="10" width="1" height="1" fill="#000"/><rect x="6" y="11" width="1" height="1" fill="#000"/><rect x="7" y="11" width="1" height="1" fill="#ffff00"/><rect x="8" y="11" width="1" height="1" fill="#000"/><rect x="5" y="12" width="1" height="1" fill="#000"/><rect x="6" y="12" width="1" height="1" fill="#ffff00"/><rect x="7" y="12" width="1" height="1" fill="#000"/><rect x="5" y="13" width="2" height="1" fill="#000"/></svg>
<svg style="position:absolute;left:587px;top:50px" width="11" height="15" shape-rendering="crispEdges"><rect x="0" y="0" width="11" height="1" fill="#808080"/><rect x="0" y="1" width="1" height="1" fill="#808080"/><rect x="1" y="1" width="9" height="1" fill="#00e000"/><rect x="10" y="1" width="1" height="1" fill="#808080"/><rect x="0" y="2" width="1" height="1" fill="#808080"/><rect x="1" y="2" width="9" height="1" fill="#fff"/><rect x="10" y="2" width="1" height="1" fill="#808080"/><rect x="0" y="3" width="1" height="1" fill="#808080"/><rect x="1" y="3" width="9" height="1" fill="#fff"/><rect x="10" y="3" width="1" height="1" fill="#808080"/><rect x="0" y="4" width="1" height="1" fill="#808080"/><rect x="1" y="4" width="1" height="1" fill="#fff"/><rect x="2" y="4" width="6" height="1" fill="#c0c0c0"/><rect x="8" y="4" width="2" height="1" fill="#fff"/><rect x="10" y="4" width="1" height="1" fill="#808080"/><rect x="0" y="5" width="1" height="1" fill="#808080"/><rect x="1" y="5" width="9" height="1" fill="#fff"/><rect x="10" y="5" width="1" height="1" fill="#808080"/><rect x="0" y="6" width="1" height="1" fill="#808080"/><rect x="1" y="6" width="1" height="1" fill="#fff"/><rect x="2" y="6" width="6" height="1" fill="#c0c0c0"/><rect x="8" y="6" width="2" height="1" fill="#fff"/><rect x="10" y="6" width="1" height="1" fill="#808080"/><rect x="0" y="7" width="1" height="1" fill="#808080"/><rect x="1" y="7" width="9" height="1" fill="#fff"/><rect x="10" y="7" width="1" height="1" fill="#808080"/><rect x="0" y="8" width="1" height="1" fill="#808080"/><rect x="1" y="8" width="1" height="1" fill="#fff"/><rect x="2" y="8" width="6" height="1" fill="#c0c0c0"/><rect x="8" y="8" width="2" height="1" fill="#fff"/><rect x="10" y="8" width="1" height="1" fill="#808080"/><rect x="0" y="9" width="1" height="1" fill="#808080"/><rect x="1" y="9" width="8" height="1" fill="#fff"/><rect x="9" y="9" width="1" height="1" fill="#c0c0ff"/><rect x="10" y="9" width="1" height="1" fill="#808080"/><rect x="0" y="10" width="1" height="1" fill="#808080"/><rect x="1" y="10" width="1" height="1" fill="#fff"/><rect x="2" y="10" width="4" height="1" fill="#c0c0c0"/><rect x="6" y="10" width="2" height="1" fill="#fff"/><rect x="8" y="10" width="1" height="1" fill="#c0c0ff"/><rect x="9" y="10" width="1" height="1" fill="#ffff00"/><rect x="10" y="10" width="1" height="1" fill="#808080"/><rect x="0" y="11" width="1" height="1" fill="#808080"/><rect x="1" y="11" width="6" height="1" fill="#fff"/><rect x="7" y="11" width="1" height="1" fill="#c0c0ff"/><rect x="8" y="11" width="2" height="1" fill="#ffff00"/><rect x="10" y="11" width="1" height="1" fill="#808080"/><rect x="0" y="12" width="1" height="1" fill="#808080"/><rect x="1" y="12" width="5" height="1" fill="#fff"/><rect x="6" y="12" width="1" height="1" fill="#c0c0ff"/><rect x="7" y="12" width="3" height="1" fill="#ffff00"/><rect x="10" y="12" width="1" height="1" fill="#808080"/><rect x="0" y="13" width="1" height="1" fill="#808080"/><rect x="1" y="13" width="4" height="1" fill="#fff"/><rect x="5" y="13" width="1" height="1" fill="#c0c0ff"/><rect x="6" y="13" width="4" height="1" fill="#ffff00"/><rect x="10" y="13" width="1" height="1" fill="#808080"/><rect x="0" y="14" width="11" height="1" fill="#808080"/></svg>
<svg style="position:absolute;left:606px;top:49px" width="16" height="16" shape-rendering="crispEdges"><rect x="5" y="0" width="6" height="1" fill="#000"/><rect x="3" y="1" width="2" height="1" fill="#000"/><rect x="5" y="1" width="6" height="1" fill="#ff00ff"/><rect x="11" y="1" width="2" height="1" fill="#000"/><rect x="2" y="2" width="1" height="1" fill="#000"/><rect x="3" y="2" width="10" height="1" fill="#ff00ff"/><rect x="13" y="2" width="1" height="1" fill="#000"/><rect x="1" y="3" width="1" height="1" fill="#000"/><rect x="2" y="3" width="3" height="1" fill="#ff00ff"/><rect x="5" y="3" width="6" height="1" fill="#000"/><rect x="11" y="3" width="3" height="1" fill="#ff00ff"/><rect x="14" y="3" width="1" height="1" fill="#000"/><rect x="1" y="4" width="1" height="1" fill="#000"/><rect x="2" y="4" width="2" height="1" fill="#ff00ff"/><rect x="4" y="4" width="1" height="1" fill="#000"/><rect x="5" y="4" width="6" height="1" fill="#fff"/><rect x="11" y="4" width="1" height="1" fill="#000"/><rect x="12" y="4" width="2" height="1" fill="#ff00ff"/><rect x="14" y="4" width="1" height="1" fill="#000"/><rect x="0" y="5" width="1" height="1" fill="#000"/><rect x="1" y="5" width="2" height="1" fill="#ff00ff"/><rect x="3" y="5" width="1" height="1" fill="#000"/><rect x="4" y="5" width="2" height="1" fill="#fff"/><rect x="6" y="5" width="4" height="1" fill="#000"/><rect x="10" y="5" width="2" height="1" fill="#fff"/><rect x="12" y="5" width="1" height="1" fill="#000"/><rect x="13" y="5" width="2" height="1" fill="#ff00ff"/><rect x="15" y="5" width="1" height="1" fill="#000"/><rect x="0" y="6" width="1" height="1" fill="#000"/><rect x="1" y="6" width="2" height="1" fill="#ff00ff"/><rect x="3" y="6" width="1" height="1" fill="#000"/><rect x="4" y="6" width="2" height="1" fill="#fff"/><rect x="6" y="6" width="1" height="1" fill="#000"/><rect x="7" y="6" width="2" height="1" fill="#ff00ff"/><rect x="9" y="6" width="1" height="1" fill="#000"/><rect x="10" y="6" width="2" height="1" fill="#fff"/><rect x="12" y="6" width="1" height="1" fill="#000"/><rect x="13" y="6" width="2" height="1" fill="#ff00ff"/><rect x="15" y="6" width="1" height="1" fill="#000"/><rect x="0" y="7" width="1" height="1" fill="#000"/><rect x="1" y="7" width="3" height="1" fill="#ff00ff"/><rect x="4" y="7" width="2" height="1" fill="#000"/><rect x="6" y="7" width="2" height="1" fill="#ff00ff"/><rect x="8" y="7" width="1" height="1" fill="#000"/><rect x="9" y="7" width="2" height="1" fill="#fff"/><rect x="11" y="7" width="1" height="1" fill="#000"/><rect x="12" y="7" width="3" height="1" fill="#ff00ff"/><rect x="15" y="7" width="1" height="1" fill="#000"/><rect x="0" y="8" width="1" height="1" fill="#000"/><rect x="1" y="8" width="6" height="1" fill="#ff00ff"/><rect x="7" y="8" width="1" height="1" fill="#000"/><rect x="8" y="8" width="2" height="1" fill="#fff"/><rect x="10" y="8" width="1" height="1" fill="#000"/><rect x="11" y="8" width="4" height="1" fill="#ff00ff"/><rect x="15" y="8" width="1" height="1" fill="#000"/><rect x="0" y="9" width="1" height="1" fill="#000"/><rect x="1" y="9" width="6" height="1" fill="#ff00ff"/><rect x="7" y="9" width="1" height="1" fill="#000"/><rect x="8" y="9" width="2" height="1" fill="#fff"/><rect x="10" y="9" width="1" height="1" fill="#000"/><rect x="11" y="9" width="4" height="1" fill="#ff00ff"/><rect x="15" y="9" width="1" height="1" fill="#000"/><rect x="0" y="10" width="1" height="1" fill="#000"/><rect x="1" y="10" width="7" height="1" fill="#ff00ff"/><rect x="8" y="10" width="2" height="1" fill="#000"/><rect x="10" y="10" width="5" height="1" fill="#ff00ff"/><rect x="15" y="10" width="1" height="1" fill="#000"/><rect x="1" y="11" width="1" height="1" fill="#000"/><rect x="2" y="11" width="5" height="1" fill="#ff00ff"/><rect x="7" y="11" width="1" height="1" fill="#000"/><rect x="8" y="11" width="2" height="1" fill="#fff"/><rect x="10" y="11" width="1" height="1" fill="#000"/><rect x="11" y="11" width="3" height="1" fill="#ff00ff"/><rect x="14" y="11" width="1" height="1" fill="#000"/><rect x="1" y="12" width="1" height="1" fill="#000"/><rect x="2" y="12" width="5" height="1" fill="#ff00ff"/><rect x="7" y="12" width="1" height="1" fill="#000"/><rect x="8" y="12" width="2" height="1" fill="#fff"/><rect x="10" y="12" width="1" height="1" fill="#000"/><rect x="11" y="12" width="3" height="1" fill="#ff00ff"/><rect x="14" y="12" width="1" height="1" fill="#000"/><rect x="2" y="13" width="1" height="1" fill="#000"/><rect x="3" y="13" width="5" height="1" fill="#ff00ff"/><rect x="8" y="13" width="2" height="1" fill="#000"/><rect x="10" y="13" width="3" height="1" fill="#ff00ff"/><rect x="13" y="13" width="1" height="1" fill="#000"/><rect x="3" y="14" width="2" height="1" fill="#000"/><rect x="5" y="14" width="6" height="1" fill="#ff00ff"/><rect x="11" y="14" width="2" height="1" fill="#000"/><rect x="5" y="15" width="6" height="1" fill="#000"/></svg>
<div style="position:absolute;left:-2px;top:71px;width:274px;height:177px;background:#fff;border:1px solid #8a8074;box-sizing:border-box"></div>
<div style="position:absolute;left:0px;top:73px;width:131px;height:17px;background:#d6d6d6"></div>
<div style="position:absolute;left:131px;top:73px;width:1px;height:103px;background:#c8c8c8"></div>
<svg style="position:absolute;left:0px;top:75px" width="11" height="14" shape-rendering="crispEdges"><rect x="2" y="0" width="5" height="1" fill="#000"/><rect x="0" y="1" width="3" height="1" fill="#000"/><rect x="3" y="1" width="2" height="1" fill="#ff0000"/><rect x="5" y="1" width="1" height="1" fill="#fff"/><rect x="6" y="1" width="5" height="1" fill="#000"/><rect x="0" y="2" width="2" height="1" fill="#ffff00"/><rect x="2" y="2" width="1" height="1" fill="#000"/><rect x="3" y="2" width="1" height="1" fill="#ff0000"/><rect x="4" y="2" width="1" height="1" fill="#fff"/><rect x="5" y="2" width="1" height="1" fill="#ff0000"/><rect x="6" y="2" width="1" height="1" fill="#000"/><rect x="7" y="2" width="3" height="1" fill="#ffff00"/><rect x="10" y="2" width="1" height="1" fill="#000"/><rect x="0" y="3" width="2" height="1" fill="#ffff00"/><rect x="2" y="3" width="1" height="1" fill="#000"/><rect x="3" y="3" width="1" height="1" fill="#ffff00"/><rect x="4" y="3" width="1" height="1" fill="#ff0000"/><rect x="5" y="3" width="1" height="1" fill="#ffff00"/><rect x="6" y="3" width="1" height="1" fill="#000"/><rect x="7" y="3" width="3" height="1" fill="#ffff00"/><rect x="10" y="3" width="1" height="1" fill="#000"/><rect x="0" y="4" width="2" height="1" fill="#ffff00"/><rect x="2" y="4" width="1" height="1" fill="#000"/><rect x="3" y="4" width="2" height="1" fill="#ffff00"/><rect x="5" y="4" width="1" height="1" fill="#00e000"/><rect x="6" y="4" width="1" height="1" fill="#000"/><rect x="7" y="4" width="3" height="1" fill="#ffff00"/><rect x="10" y="4" width="1" height="1" fill="#000"/><rect x="0" y="5" width="3" height="1" fill="#000"/><rect x="3" y="5" width="1" height="1" fill="#00e000"/><rect x="4" y="5" width="1" height="1" fill="#ffff00"/><rect x="5" y="5" width="1" height="1" fill="#00e000"/><rect x="6" y="5" width="5" height="1" fill="#000"/><rect x="0" y="6" width="1" height="1" fill="#c0c0c0"/><rect x="1" y="6" width="1" height="1" fill="#fff"/><rect x="2" y="6" width="1" height="1" fill="#000"/><rect x="3" y="6" width="2" height="1" fill="#00e000"/><rect x="5" y="6" width="1" height="1" fill="#c8e4e4"/><rect x="6" y="6" width="1" height="1" fill="#000"/><rect x="7" y="6" width="1" height="1" fill="#c0c0c0"/><rect x="8" y="6" width="1" height="1" fill="#fff"/><rect x="9" y="6" width="1" height="1" fill="#c0c0c0"/><rect x="10" y="6" width="1" height="1" fill="#000"/><rect x="0" y="7" width="2" height="1" fill="#c0c0c0"/><rect x="2" y="7" width="1" height="1" fill="#000"/><rect x="3" y="7" width="1" height="1" fill="#c8e4e4"/><rect x="4" y="7" width="1" height="1" fill="#00e000"/><rect x="5" y="7" width="1" height="1" fill="#c8e4e4"/><rect x="6" y="7" width="1" height="1" fill="#000"/><rect x="7" y="7" width="3" height="1" fill="#c0c0c0"/><rect x="10" y="7" width="1" height="1" fill="#000"/><rect x="0" y="8" width="1" height="1" fill="#c0c0c0"/><rect x="1" y="8" width="1" height="1" fill="#fff"/><rect x="2" y="8" width="1" height="1" fill="#000"/><rect x="3" y="8" width="2" height="1" fill="#c8e4e4"/><rect x="5" y="8" width="1" height="1" fill="#0000ff"/><rect x="6" y="8" width="1" height="1" fill="#000"/><rect x="7" y="8" width="1" height="1" fill="#c0c0c0"/><rect x="8" y="8" width="1" height="1" fill="#fff"/><rect x="9" y="8" width="1" height="1" fill="#c0c0c0"/><rect x="10" y="8" width="1" height="1" fill="#000"/><rect x="0" y="9" width="3" height="1" fill="#000"/><rect x="3" y="9" width="1" height="1" fill="#0000ff"/><rect x="4" y="9" width="1" height="1" fill="#c8e4e4"/><rect x="5" y="9" width="1" height="1" fill="#0000ff"/><rect x="6" y="9" width="5" height="1" fill="#000"/><rect x="0" y="10" width="2" height="1" fill="#ffff00"/><rect x="2" y="10" width="1" height="1" fill="#000"/><rect x="3" y="10" width="2" height="1" fill="#0000ff"/><rect x="5" y="10" width="1" height="1" fill="#fff"/><rect x="6" y="10" width="1" height="1" fill="#000"/><rect x="7" y="10" width="3" height="1" fill="#ffff00"/><rect x="10" y="10" width="1" height="1" fill="#000"/><rect x="0" y="11" width="2" height="1" fill="#ffff00"/><rect x="2" y="11" width="1" height="1" fill="#000"/><rect x="3" y="11" width="1" height="1" fill="#fff"/><rect x="4" y="11" width="1" height="1" fill="#0000ff"/><rect x="5" y="11" width="1" height="1" fill="#fff"/><rect x="6" y="11" width="1" height="1" fill="#000"/><rect x="7" y="11" width="3" height="1" fill="#ffff00"/><rect x="10" y="11" width="1" height="1" fill="#000"/><rect x="0" y="12" width="3" height="1" fill="#000"/><rect x="3" y="12" width="3" height="1" fill="#fff"/><rect x="6" y="12" width="5" height="1" fill="#000"/><rect x="2" y="13" width="5" height="1" fill="#000"/></svg>
<div class="t" style="left:14.42px;top:75px;color:#000;transform:scaleX(1.0960);transform-origin:0 0;font-weight:bold;font-size:13.5px;">consolapp</div>
<svg style="position:absolute;left:0px;top:92px" width="11" height="14" shape-rendering="crispEdges"><rect x="2" y="0" width="5" height="1" fill="#000"/><rect x="0" y="1" width="3" height="1" fill="#000"/><rect x="3" y="1" width="2" height="1" fill="#ff0000"/><rect x="5" y="1" width="1" height="1" fill="#fff"/><rect x="6" y="1" width="5" height="1" fill="#000"/><rect x="0" y="2" width="2" height="1" fill="#ffff00"/><rect x="2" y="2" width="1" height="1" fill="#000"/><rect x="3" y="2" width="1" height="1" fill="#ff0000"/><rect x="4" y="2" width="1" height="1" fill="#fff"/><rect x="5" y="2" width="1" height="1" fill="#ff0000"/><rect x="6" y="2" width="1" height="1" fill="#000"/><rect x="7" y="2" width="3" height="1" fill="#ffff00"/><rect x="10" y="2" width="1" height="1" fill="#000"/><rect x="0" y="3" width="2" height="1" fill="#ffff00"/><rect x="2" y="3" width="1" height="1" fill="#000"/><rect x="3" y="3" width="1" height="1" fill="#ffff00"/><rect x="4" y="3" width="1" height="1" fill="#ff0000"/><rect x="5" y="3" width="1" height="1" fill="#ffff00"/><rect x="6" y="3" width="1" height="1" fill="#000"/><rect x="7" y="3" width="3" height="1" fill="#ffff00"/><rect x="10" y="3" width="1" height="1" fill="#000"/><rect x="0" y="4" width="2" height="1" fill="#ffff00"/><rect x="2" y="4" width="1" height="1" fill="#000"/><rect x="3" y="4" width="2" height="1" fill="#ffff00"/><rect x="5" y="4" width="1" height="1" fill="#00e000"/><rect x="6" y="4" width="1" height="1" fill="#000"/><rect x="7" y="4" width="3" height="1" fill="#ffff00"/><rect x="10" y="4" width="1" height="1" fill="#000"/><rect x="0" y="5" width="3" height="1" fill="#000"/><rect x="3" y="5" width="1" height="1" fill="#00e000"/><rect x="4" y="5" width="1" height="1" fill="#ffff00"/><rect x="5" y="5" width="1" height="1" fill="#00e000"/><rect x="6" y="5" width="5" height="1" fill="#000"/><rect x="0" y="6" width="1" height="1" fill="#c0c0c0"/><rect x="1" y="6" width="1" height="1" fill="#fff"/><rect x="2" y="6" width="1" height="1" fill="#000"/><rect x="3" y="6" width="2" height="1" fill="#00e000"/><rect x="5" y="6" width="1" height="1" fill="#c8e4e4"/><rect x="6" y="6" width="1" height="1" fill="#000"/><rect x="7" y="6" width="1" height="1" fill="#c0c0c0"/><rect x="8" y="6" width="1" height="1" fill="#fff"/><rect x="9" y="6" width="1" height="1" fill="#c0c0c0"/><rect x="10" y="6" width="1" height="1" fill="#000"/><rect x="0" y="7" width="2" height="1" fill="#c0c0c0"/><rect x="2" y="7" width="1" height="1" fill="#000"/><rect x="3" y="7" width="1" height="1" fill="#c8e4e4"/><rect x="4" y="7" width="1" height="1" fill="#00e000"/><rect x="5" y="7" width="1" height="1" fill="#c8e4e4"/><rect x="6" y="7" width="1" height="1" fill="#000"/><rect x="7" y="7" width="3" height="1" fill="#c0c0c0"/><rect x="10" y="7" width="1" height="1" fill="#000"/><rect x="0" y="8" width="1" height="1" fill="#c0c0c0"/><rect x="1" y="8" width="1" height="1" fill="#fff"/><rect x="2" y="8" width="1" height="1" fill="#000"/><rect x="3" y="8" width="2" height="1" fill="#c8e4e4"/><rect x="5" y="8" width="1" height="1" fill="#0000ff"/><rect x="6" y="8" width="1" height="1" fill="#000"/><rect x="7" y="8" width="1" height="1" fill="#c0c0c0"/><rect x="8" y="8" width="1" height="1" fill="#fff"/><rect x="9" y="8" width="1" height="1" fill="#c0c0c0"/><rect x="10" y="8" width="1" height="1" fill="#000"/><rect x="0" y="9" width="3" height="1" fill="#000"/><rect x="3" y="9" width="1" height="1" fill="#0000ff"/><rect x="4" y="9" width="1" height="1" fill="#c8e4e4"/><rect x="5" y="9" width="1" height="1" fill="#0000ff"/><rect x="6" y="9" width="5" height="1" fill="#000"/><rect x="0" y="10" width="2" height="1" fill="#ffff00"/><rect x="2" y="10" width="1" height="1" fill="#000"/><rect x="3" y="10" width="2" height="1" fill="#0000ff"/><rect x="5" y="10" width="1" height="1" fill="#fff"/><rect x="6" y="10" width="1" height="1" fill="#000"/><rect x="7" y="10" width="3" height="1" fill="#ffff00"/><rect x="10" y="10" width="1" height="1" fill="#000"/><rect x="0" y="11" width="2" height="1" fill="#ffff00"/><rect x="2" y="11" width="1" height="1" fill="#000"/><rect x="3" y="11" width="1" height="1" fill="#fff"/><rect x="4" y="11" width="1" height="1" fill="#0000ff"/><rect x="5" y="11" width="1" height="1" fill="#fff"/><rect x="6" y="11" width="1" height="1" fill="#000"/><rect x="7" y="11" width="3" height="1" fill="#ffff00"/><rect x="10" y="11" width="1" height="1" fill="#000"/><rect x="0" y="12" width="3" height="1" fill="#000"/><rect x="3" y="12" width="3" height="1" fill="#fff"/><rect x="6" y="12" width="5" height="1" fill="#000"/><rect x="2" y="13" width="5" height="1" fill="#000"/></svg>
<div class="t" style="left:14.30px;top:92px;color:#000;transform:scaleX(1.0226);transform-origin:0 0;font-size:13.5px;">Core</div>
<svg style="position:absolute;left:0px;top:109px" width="12" height="14" shape-rendering="crispEdges"><rect x="2" y="0" width="10" height="1" fill="#000"/><rect x="0" y="1" width="3" height="1" fill="#000"/><rect x="3" y="1" width="2" height="1" fill="#ff0000"/><rect x="5" y="1" width="1" height="1" fill="#fff"/><rect x="6" y="1" width="1" height="1" fill="#000"/><rect x="7" y="1" width="4" height="1" fill="#ff00ff"/><rect x="11" y="1" width="1" height="1" fill="#000"/><rect x="0" y="2" width="2" height="1" fill="#ffff00"/><rect x="2" y="2" width="1" height="1" fill="#000"/><rect x="3" y="2" width="1" height="1" fill="#ff0000"/><rect x="4" y="2" width="1" height="1" fill="#fff"/><rect x="5" y="2" width="1" height="1" fill="#ff0000"/><rect x="6" y="2" width="1" height="1" fill="#000"/><rect x="7" y="2" width="1" height="1" fill="#ff00ff"/><rect x="8" y="2" width="4" height="1" fill="#000"/><rect x="0" y="3" width="2" height="1" fill="#ffff00"/><rect x="2" y="3" width="1" height="1" fill="#000"/><rect x="3" y="3" width="1" height="1" fill="#ffff00"/><rect x="4" y="3" width="1" height="1" fill="#ff0000"/><rect x="5" y="3" width="1" height="1" fill="#ffff00"/><rect x="6" y="3" width="1" height="1" fill="#000"/><rect x="7" y="3" width="3" height="1" fill="#ff00ff"/><rect x="10" y="3" width="1" height="1" fill="#000"/><rect x="0" y="4" width="2" height="1" fill="#ffff00"/><rect x="2" y="4" width="1" height="1" fill="#000"/><rect x="3" y="4" width="2" height="1" fill="#ffff00"/><rect x="5" y="4" width="1" height="1" fill="#00e000"/><rect x="6" y="4" width="1" height="1" fill="#000"/><rect x="7" y="4" width="1" height="1" fill="#ff00ff"/><rect x="8" y="4" width="3" height="1" fill="#000"/><rect x="0" y="5" width="3" height="1" fill="#000"/><rect x="3" y="5" width="1" height="1" fill="#00e000"/><rect x="4" y="5" width="1" height="1" fill="#ffff00"/><rect x="5" y="5" width="1" height="1" fill="#00e000"/><rect x="6" y="5" width="1" height="1" fill="#000"/><rect x="7" y="5" width="1" height="1" fill="#ff00ff"/><rect x="8" y="5" width="4" height="1" fill="#000"/><rect x="0" y="6" width="1" height="1" fill="#c0c0c0"/><rect x="1" y="6" width="1" height="1" fill="#fff"/><rect x="2" y="6" width="1" height="1" fill="#000"/><rect x="3" y="6" width="2" height="1" fill="#00e000"/><rect x="5" y="6" width="1" height="1" fill="#c8e4e4"/><rect x="6" y="6" width="1" height="1" fill="#000"/><rect x="7" y="6" width="1" height="1" fill="#c0c0c0"/><rect x="8" y="6" width="1" height="1" fill="#fff"/><rect x="9" y="6" width="1" height="1" fill="#c0c0c0"/><rect x="10" y="6" width="1" height="1" fill="#000"/><rect x="0" y="7" width="2" height="1" fill="#c0c0c0"/><rect x="2" y="7" width="1" height="1" fill="#000"/><rect x="3" y="7" width="1" height="1" fill="#c8e4e4"/><rect x="4" y="7" width="1" height="1" fill="#00e000"/><rect x="5" y="7" width="1" height="1" fill="#c8e4e4"/><rect x="6" y="7" width="1" height="1" fill="#000"/><rect x="7" y="7" width="3" height="1" fill="#c0c0c0"/><rect x="10" y="7" width="1" height="1" fill="#000"/><rect x="0" y="8" width="1" height="1" fill="#c0c0c0"/><rect x="1" y="8" width="1" height="1" fill="#fff"/><rect x="2" y="8" width="1" height="1" fill="#000"/><rect x="3" y="8" width="2" height="1" fill="#c8e4e4"/><rect x="5" y="8" width="1" height="1" fill="#0000ff"/><rect x="6" y="8" width="1" height="1" fill="#000"/><rect x="7" y="8" width="1" height="1" fill="#c0c0c0"/><rect x="8" y="8" width="1" height="1" fill="#fff"/><rect x="9" y="8" width="1" height="1" fill="#c0c0c0"/><rect x="10" y="8" width="1" height="1" fill="#000"/><rect x="0" y="9" width="3" height="1" fill="#000"/><rect x="3" y="9" width="1" height="1" fill="#0000ff"/><rect x="4" y="9" width="1" height="1" fill="#c8e4e4"/><rect x="5" y="9" width="1" height="1" fill="#0000ff"/><rect x="6" y="9" width="5" height="1" fill="#000"/><rect x="0" y="10" width="2" height="1" fill="#ffff00"/><rect x="2" y="10" width="1" height="1" fill="#000"/><rect x="3" y="10" width="2" height="1" fill="#0000ff"/><rect x="5" y="10" width="1" height="1" fill="#fff"/><rect x="6" y="10" width="1" height="1" fill="#000"/><rect x="7" y="10" width="3" height="1" fill="#ffff00"/><rect x="10" y="10" width="1" height="1" fill="#000"/><rect x="0" y="11" width="2" height="1" fill="#ffff00"/><rect x="2" y="11" width="1" height="1" fill="#000"/><rect x="3" y="11" width="1" height="1" fill="#fff"/><rect x="4" y="11" width="1" height="1" fill="#0000ff"/><rect x="5" y="11" width="1" height="1" fill="#fff"/><rect x="6" y="11" width="1" height="1" fill="#000"/><rect x="7" y="11" width="3" height="1" fill="#ffff00"/><rect x="10" y="11" width="1" height="1" fill="#000"/><rect x="0" y="12" width="3" height="1" fill="#000"/><rect x="3" y="12" width="3" height="1" fill="#fff"/><rect x="6" y="12" width="5" height="1" fill="#000"/><rect x="2" y="13" width="5" height="1" fill="#000"/></svg>
<div class="t" style="left:14.04px;top:109px;color:#000;transform:scaleX(1.0982);transform-origin:0 0;font-size:13.5px;">plugin\z</div>
<svg style="position:absolute;left:0px;top:129px" width="10" height="9" shape-rendering="crispEdges"><rect x="0" y="0" width="10" height="1" fill="#000"/><rect x="0" y="1" width="1" height="1" fill="#000"/><rect x="1" y="1" width="8" height="1" fill="#ffff00"/><rect x="9" y="1" width="1" height="1" fill="#000"/><rect x="0" y="2" width="1" height="1" fill="#000"/><rect x="1" y="2" width="1" height="1" fill="#800000"/><rect x="2" y="2" width="1" height="1" fill="#ffff00"/><rect x="3" y="2" width="1" height="1" fill="#800000"/><rect x="4" y="2" width="1" height="1" fill="#ffff00"/><rect x="5" y="2" width="1" height="1" fill="#800000"/><rect x="6" y="2" width="1" height="1" fill="#ffff00"/><rect x="7" y="2" width="1" height="1" fill="#800000"/><rect x="8" y="2" width="1" height="1" fill="#ffff00"/><rect x="9" y="2" width="1" height="1" fill="#000"/><rect x="0" y="3" width="1" height="1" fill="#000"/><rect x="1" y="3" width="8" height="1" fill="#ffff00"/><rect x="9" y="3" width="1" height="1" fill="#000"/><rect x="0" y="4" width="1" height="1" fill="#000"/><rect x="1" y="4" width="1" height="1" fill="#800000"/><rect x="2" y="4" width="1" height="1" fill="#ffff00"/><rect x="3" y="4" width="1" height="1" fill="#800000"/><rect x="4" y="4" width="1" height="1" fill="#ffff00"/><rect x="5" y="4" width="1" height="1" fill="#800000"/><rect x="6" y="4" width="1" height="1" fill="#ffff00"/><rect x="7" y="4" width="1" height="1" fill="#800000"/><rect x="8" y="4" width="1" height="1" fill="#ffff00"/><rect x="9" y="4" width="1" height="1" fill="#000"/><rect x="0" y="5" width="1" height="1" fill="#000"/><rect x="1" y="5" width="8" height="1" fill="#ffff00"/><rect x="9" y="5" width="1" height="1" fill="#000"/><rect x="0" y="6" width="1" height="1" fill="#000"/><rect x="1" y="6" width="1" height="1" fill="#800000"/><rect x="2" y="6" width="1" height="1" fill="#ffff00"/><rect x="3" y="6" width="1" height="1" fill="#800000"/><rect x="4" y="6" width="1" height="1" fill="#ffff00"/><rect x="5" y="6" width="1" height="1" fill="#800000"/><rect x="6" y="6" width="1" height="1" fill="#ffff00"/><rect x="7" y="6" width="1" height="1" fill="#800000"/><rect x="8" y="6" width="1" height="1" fill="#ffff00"/><rect x="9" y="6" width="1" height="1" fill="#000"/><rect x="0" y="7" width="1" height="1" fill="#000"/><rect x="1" y="7" width="8" height="1" fill="#ffff00"/><rect x="9" y="7" width="1" height="1" fill="#000"/><rect x="0" y="8" width="10" height="1" fill="#000"/></svg>
<div class="t" style="left:14.22px;top:126px;color:#9933ff;transform:scaleX(1.1778);transform-origin:0 0;font-size:13.5px;">&lt;prj-aux&gt;</div>
<svg style="position:absolute;left:0px;top:146px" width="10" height="9" shape-rendering="crispEdges"><rect x="0" y="0" width="10" height="1" fill="#000"/><rect x="0" y="1" width="1" height="1" fill="#000"/><rect x="1" y="1" width="8" height="1" fill="#00ffff"/><rect x="9" y="1" width="1" height="1" fill="#000"/><rect x="0" y="2" width="1" height="1" fill="#000"/><rect x="1" y="2" width="1" height="1" fill="#800000"/><rect x="2" y="2" width="1" height="1" fill="#00ffff"/><rect x="3" y="2" width="1" height="1" fill="#800000"/><rect x="4" y="2" width="1" height="1" fill="#00ffff"/><rect x="5" y="2" width="1" height="1" fill="#800000"/><rect x="6" y="2" width="1" height="1" fill="#00ffff"/><rect x="7" y="2" width="1" height="1" fill="#800000"/><rect x="8" y="2" width="1" height="1" fill="#00ffff"/><rect x="9" y="2" width="1" height="1" fill="#000"/><rect x="0" y="3" width="1" height="1" fill="#000"/><rect x="1" y="3" width="8" height="1" fill="#00ffff"/><rect x="9" y="3" width="1" height="1" fill="#000"/><rect x="0" y="4" width="1" height="1" fill="#000"/><rect x="1" y="4" width="1" height="1" fill="#800000"/><rect x="2" y="4" width="1" height="1" fill="#00ffff"/><rect x="3" y="4" width="1" height="1" fill="#800000"/><rect x="4" y="4" width="1" height="1" fill="#00ffff"/><rect x="5" y="4" width="1" height="1" fill="#800000"/><rect x="6" y="4" width="1" height="1" fill="#00ffff"/><rect x="7" y="4" width="1" height="1" fill="#800000"/><rect x="8" y="4" width="1" height="1" fill="#00ffff"/><rect x="9" y="4" width="1" height="1" fill="#000"/><rect x="0" y="5" width="1" height="1" fill="#000"/><rect x="1" y="5" width="8" height="1" fill="#00ffff"/><rect x="9" y="5" width="1" height="1" fill="#000"/><rect x="0" y="6" width="1" height="1" fill="#000"/><rect x="1" y="6" width="1" height="1" fill="#800000"/><rect x="2" y="6" width="1" height="1" fill="#00ffff"/><rect x="3" y="6" width="1" height="1" fill="#800000"/><rect x="4" y="6" width="1" height="1" fill="#00ffff"/><rect x="5" y="6" width="1" height="1" fill="#800000"/><rect x="6" y="6" width="1" height="1" fill="#00ffff"/><rect x="7" y="6" width="1" height="1" fill="#800000"/><rect x="8" y="6" width="1" height="1" fill="#00ffff"/><rect x="9" y="6" width="1" height="1" fill="#000"/><rect x="0" y="7" width="1" height="1" fill="#000"/><rect x="1" y="7" width="8" height="1" fill="#00ffff"/><rect x="9" y="7" width="1" height="1" fill="#000"/><rect x="0" y="8" width="10" height="1" fill="#000"/></svg>
<div class="t" style="left:14.23px;top:143px;color:#9933ff;transform:scaleX(1.1626);transform-origin:0 0;font-size:13.5px;">&lt;ide-aux&gt;</div>
<svg style="position:absolute;left:0px;top:163px" width="10" height="9" shape-rendering="crispEdges"><rect x="0" y="0" width="10" height="1" fill="#000"/><rect x="0" y="1" width="1" height="1" fill="#000"/><rect x="1" y="1" width="8" height="1" fill="#c0c0c0"/><rect x="9" y="1" width="1" height="1" fill="#000"/><rect x="0" y="2" width="1" height="1" fill="#000"/><rect x="1" y="2" width="1" height="1" fill="#800000"/><rect x="2" y="2" width="1" height="1" fill="#c0c0c0"/><rect x="3" y="2" width="1" height="1" fill="#800000"/><rect x="4" y="2" width="1" height="1" fill="#c0c0c0"/><rect x="5" y="2" width="1" height="1" fill="#800000"/><rect x="6" y="2" width="1" height="1" fill="#c0c0c0"/><rect x="7" y="2" width="1" height="1" fill="#800000"/><rect x="8" y="2" width="1" height="1" fill="#c0c0c0"/><rect x="9" y="2" width="1" height="1" fill="#000"/><rect x="0" y="3" width="1" height="1" fill="#000"/><rect x="1" y="3" width="8" height="1" fill="#c0c0c0"/><rect x="9" y="3" width="1" height="1" fill="#000"/><rect x="0" y="4" width="1" height="1" fill="#000"/><rect x="1" y="4" width="1" height="1" fill="#800000"/><rect x="2" y="4" width="1" height="1" fill="#c0c0c0"/><rect x="3" y="4" width="1" height="1" fill="#800000"/><rect x="4" y="4" width="1" height="1" fill="#c0c0c0"/><rect x="5" y="4" width="1" height="1" fill="#800000"/><rect x="6" y="4" width="1" height="1" fill="#c0c0c0"/><rect x="7" y="4" width="1" height="1" fill="#800000"/><rect x="8" y="4" width="1" height="1" fill="#c0c0c0"/><rect x="9" y="4" width="1" height="1" fill="#000"/><rect x="0" y="5" width="1" height="1" fill="#000"/><rect x="1" y="5" width="8" height="1" fill="#c0c0c0"/><rect x="9" y="5" width="1" height="1" fill="#000"/><rect x="0" y="6" width="1" height="1" fill="#000"/><rect x="1" y="6" width="1" height="1" fill="#800000"/><rect x="2" y="6" width="1" height="1" fill="#c0c0c0"/><rect x="3" y="6" width="1" height="1" fill="#800000"/><rect x="4" y="6" width="1" height="1" fill="#c0c0c0"/><rect x="5" y="6" width="1" height="1" fill="#800000"/><rect x="6" y="6" width="1" height="1" fill="#c0c0c0"/><rect x="7" y="6" width="1" height="1" fill="#800000"/><rect x="8" y="6" width="1" height="1" fill="#c0c0c0"/><rect x="9" y="6" width="1" height="1" fill="#000"/><rect x="0" y="7" width="1" height="1" fill="#000"/><rect x="1" y="7" width="8" height="1" fill="#c0c0c0"/><rect x="9" y="7" width="1" height="1" fill="#000"/><rect x="0" y="8" width="10" height="1" fill="#000"/></svg>
<div class="t" style="left:14.22px;top:160px;color:#9933ff;transform:scaleX(1.1643);transform-origin:0 0;font-size:13.5px;">&lt;temp-aux&gt;</div>
<div style="position:absolute;left:-2px;top:252px;width:274px;height:620px;background:#fff;border:1px solid #8a8074;box-sizing:border-box"></div>
<div style="position:absolute;left:0px;top:254px;width:269px;height:17px;background:#d6d6d6"></div>
<svg style="position:absolute;left:-3px;top:257px" width="12" height="12" shape-rendering="crispEdges"><rect x="3" y="0" width="5" height="1" fill="#000"/><rect x="2" y="1" width="1" height="1" fill="#000"/><rect x="3" y="1" width="5" height="1" fill="#ff0000"/><rect x="8" y="1" width="2" height="1" fill="#000"/><rect x="1" y="2" width="1" height="1" fill="#000"/><rect x="2" y="2" width="7" height="1" fill="#ff0000"/><rect x="9" y="2" width="1" height="1" fill="#000"/><rect x="0" y="3" width="1" height="1" fill="#000"/><rect x="1" y="3" width="2" height="1" fill="#ff0000"/><rect x="3" y="3" width="4" height="1" fill="#000"/><rect x="7" y="3" width="2" height="1" fill="#ff0000"/><rect x="9" y="3" width="1" height="1" fill="#000"/><rect x="0" y="4" width="1" height="1" fill="#000"/><rect x="1" y="4" width="1" height="1" fill="#ff0000"/><rect x="2" y="4" width="1" height="1" fill="#000"/><rect x="3" y="4" width="4" height="1" fill="#c8e4e4"/><rect x="7" y="4" width="3" height="1" fill="#000"/><rect x="0" y="5" width="1" height="1" fill="#000"/><rect x="1" y="5" width="1" height="1" fill="#ff0000"/><rect x="2" y="5" width="1" height="1" fill="#000"/><rect x="3" y="5" width="4" height="1" fill="#c8e4e4"/><rect x="0" y="6" width="1" height="1" fill="#000"/><rect x="1" y="6" width="1" height="1" fill="#ff0000"/><rect x="2" y="6" width="1" height="1" fill="#000"/><rect x="3" y="6" width="4" height="1" fill="#c8e4e4"/><rect x="0" y="7" width="1" height="1" fill="#000"/><rect x="1" y="7" width="1" height="1" fill="#ff0000"/><rect x="2" y="7" width="1" height="1" fill="#000"/><rect x="3" y="7" width="4" height="1" fill="#c8e4e4"/><rect x="7" y="7" width="3" height="1" fill="#000"/><rect x="0" y="8" width="1" height="1" fill="#000"/><rect x="1" y="8" width="2" height="1" fill="#ff0000"/><rect x="3" y="8" width="4" height="1" fill="#000"/><rect x="7" y="8" width="2" height="1" fill="#ff0000"/><rect x="9" y="8" width="1" height="1" fill="#000"/><rect x="1" y="9" width="1" height="1" fill="#000"/><rect x="2" y="9" width="7" height="1" fill="#ff0000"/><rect x="9" y="9" width="1" height="1" fill="#000"/><rect x="2" y="10" width="1" height="1" fill="#000"/><rect x="3" y="10" width="5" height="1" fill="#ff0000"/><rect x="8" y="10" width="2" height="1" fill="#000"/><rect x="3" y="11" width="5" height="1" fill="#000"/></svg>
<div class="t" style="left:12.62px;top:255px;color:#999;transform:scaleX(1.1166);transform-origin:0 0;font-size:13.5px;">../</div>
<div class="t" style="left:25.06px;top:255px;color:#000;transform:scaleX(1.0761);transform-origin:0 0;font-size:13.5px;">upp/MyApps/consolapp/main.</div>
<div class="t" style="left:214.38px;top:255px;color:#1010e0;transform:scaleX(1.0799);transform-origin:0 0;font-size:13.5px;">cpp</div>
<div style="position:absolute;left:276px;top:97px;width:900px;height:770px;background:#fff;border-left:1px solid #8a8074;border-top:1px solid #8a8074;box-sizing:border-box"></div>
<div style="position:absolute;left:277px;top:99px;width:13px;height:770px;background:#f3f2f0"></div>
<div style="position:absolute;left:276px;top:72px;width:97px;height:26px;background:#fff;border-left:1px solid #8a8074;border-right:1px solid #8a8074;border-top:1px solid #6e6358;box-sizing:border-box;border-radius:2px 2px 0 0"></div>
<div style="position:absolute;left:277px;top:73px;width:95px;height:2px;background:#f7980f"></div>
<div style="position:absolute;left:277px;top:97px;width:95px;height:1px;background:#ebe7e2"></div>
<svg style="position:absolute;left:287px;top:79px" width="12" height="12" shape-rendering="crispEdges"><rect x="3" y="0" width="5" height="1" fill="#000"/><rect x="2" y="1" width="1" height="1" fill="#000"/><rect x="3" y="1" width="5" height="1" fill="#ff0000"/><rect x="8" y="1" width="2" height="1" fill="#000"/><rect x="1" y="2" width="1" height="1" fill="#000"/><rect x="2" y="2" width="7" height="1" fill="#ff0000"/><rect x="9" y="2" width="1" height="1" fill="#000"/><rect x="0" y="3" width="1" height="1" fill="#000"/><rect x="1" y="3" width="2" height="1" fill="#ff0000"/><rect x="3" y="3" width="4" height="1" fill="#000"/><rect x="7" y="3" width="2" height="1" fill="#ff0000"/><rect x="9" y="3" width="1" height="1" fill="#000"/><rect x="0" y="4" width="1" height="1" fill="#000"/><rect x="1" y="4" width="1" height="1" fill="#ff0000"/><rect x="2" y="4" width="1" height="1" fill="#000"/><rect x="3" y="4" width="4" height="1" fill="#c8e4e4"/><rect x="7" y="4" width="3" height="1" fill="#000"/><rect x="0" y="5" width="1" height="1" fill="#000"/><rect x="1" y="5" width="1" height="1" fill="#ff0000"/><rect x="2" y="5" width="1" height="1" fill="#000"/><rect x="3" y="5" width="4" height="1" fill="#c8e4e4"/><rect x="0" y="6" width="1" height="1" fill="#000"/><rect x="1" y="6" width="1" height="1" fill="#ff0000"/><rect x="2" y="6" width="1" height="1" fill="#000"/><rect x="3" y="6" width="4" height="1" fill="#c8e4e4"/><rect x="0" y="7" width="1" height="1" fill="#000"/><rect x="1" y="7" width="1" height="1" fill="#ff0000"/><rect x="2" y="7" width="1" height="1" fill="#000"/><rect x="3" y="7" width="4" height="1" fill="#c8e4e4"/><rect x="7" y="7" width="3" height="1" fill="#000"/><rect x="0" y="8" width="1" height="1" fill="#000"/><rect x="1" y="8" width="2" height="1" fill="#ff0000"/><rect x="3" y="8" width="4" height="1" fill="#000"/><rect x="7" y="8" width="2" height="1" fill="#ff0000"/><rect x="9" y="8" width="1" height="1" fill="#000"/><rect x="1" y="9" width="1" height="1" fill="#000"/><rect x="2" y="9" width="7" height="1" fill="#ff0000"/><rect x="9" y="9" width="1" height="1" fill="#000"/><rect x="2" y="10" width="1" height="1" fill="#000"/><rect x="3" y="10" width="5" height="1" fill="#ff0000"/><rect x="8" y="10" width="2" height="1" fill="#000"/><rect x="3" y="11" width="5" height="1" fill="#000"/></svg>
<div class="t" style="left:303.16px;top:77px;color:#111;transform:scaleX(1.0506);transform-origin:0 0;font-size:12px;">main.</div>
<div class="t" style="left:333.48px;top:77px;color:#1010e0;transform:scaleX(1.0296);transform-origin:0 0;font-size:12px;">cpp</div>
<div style="position:absolute;left:1058px;top:98px;width:1px;height:9px;background:#e4e4e4"></div>
<div style="position:absolute;left:291px;top:100px;font:13px/16px 'Liberation Mono',monospace;white-space:nowrap;letter-spacing:0px"><span style="color:#8000ff">#include</span> <span style="color:#0000ff">&lt;</span>Core<span style="color:#0000ff">/</span>Core.h<span style="color:#0000ff">&gt;</span></div>
<div style="position:absolute;left:1151px;top:217px;width:20px;height:69px;background:#efeffb"></div>
<div style="position:absolute;left:1151px;top:320px;width:20px;height:17px;background:#efeffb"></div>
<div style="position:absolute;left:285px;top:107px;width:865px;height:750px;background:#eeebe6;border:1px solid #3a3632;border-radius:7px 7px 6px 6px;box-sizing:border-box"></div>
<div style="position:absolute;left:286px;top:108px;width:863px;height:23px;background:linear-gradient(#eaaa6a 0%,#e19a55 35%,#c98039 50%,#d08843 100%);border-radius:6px 6px 0 0"></div>
<div style="position:absolute;left:286px;top:130px;width:863px;height:1px;background:#6e4a26"></div>
<div style="position:absolute;left:293px;top:114px;width:14px;height:11px;background:linear-gradient(90deg,#e8e8e8,#f4f4f4);border:1px solid #4e4438;border-top:2px solid #23466e;box-sizing:border-box;box-shadow:inset 1px 1px 0 #fff"></div>
<div class="t" style="left:668.37px;top:111px;color:#fff;transform:scaleX(1.1426);transform-origin:0 0;font-weight:bold;font-size:13.5px;text-shadow:1px 1px 0.6px rgba(70,35,5,.75);">Output mode</div>
<div style="position:absolute;left:1121px;top:111px;width:24px;height:17px;border:1px solid #8a5522;border-radius:2px;box-sizing:border-box;background:linear-gradient(#e2a060,#c88040)"></div>
<svg style="position:absolute;left:1127px;top:113px" width="12" height="12" viewBox="0 0 12 12"><path d="M2.5 2.5 L9.5 9.5 M9.5 2.5 L2.5 9.5" stroke="#6a3a10" stroke-width="3.2" opacity=".35"/><path d="M2.5 2.5 L9.5 9.5 M9.5 2.5 L2.5 9.5" stroke="#fff" stroke-width="2.4"/></svg>
<div class="t" style="left:301.78px;top:140px;color:#111;transform:scaleX(1.1000);transform-origin:0 0;font-size:13.5px;">Build method:</div>
<div style="position:absolute;left:400px;top:136px;width:249px;height:24px;background:#fed29a;border:1px solid #8a8074;box-sizing:border-box"></div>
<div style="position:absolute;left:631px;top:136px;width:18px;height:24px;background:linear-gradient(90deg,#f4f2ef,#e6e2dd);border:1px solid #8a8074;box-sizing:border-box"></div>
<svg style="position:absolute;left:636px;top:146px" width="7" height="4" shape-rendering="crispEdges"><rect x="0" y="0" width="7" height="1" fill="#000"/><rect x="1" y="1" width="5" height="1" fill="#000"/><rect x="2" y="2" width="3" height="1" fill="#000"/><rect x="3" y="3" width="1" height="1" fill="#000"/></svg>
<div style="position:absolute;left:401px;top:137px;width:229px;height:22px;background:#fed29a"></div>
<div class="t" style="left:403.36px;top:140px;color:#111;transform:scaleX(0.9364);transform-origin:0 0;font-size:13.5px;">GCC</div>
<div style="position:absolute;left:702px;top:167px;width:1px;height:633px;background:#fff"></div>
<div style="position:absolute;left:703px;top:167px;width:1px;height:633px;background:#a8a097"></div>
<div style="position:absolute;left:622px;top:175px;width:13px;height:13px;background:radial-gradient(circle at 35% 35%,#fff,#dcd9d4);border:1px solid #6e665e;border-radius:50%;box-sizing:border-box"></div>
<div class="t" style="left:639.82px;top:174px;color:#111;transform:scaleX(1.0684);transform-origin:0 0;font-size:13.5px;">Debug</div>
<div style="position:absolute;left:303px;top:210px;width:12px;height:12px;background:linear-gradient(135deg,#fff,#e0ddd8);border:1px solid #7a7068;border-radius:1px;box-sizing:border-box;box-shadow:1px 1px 0 rgba(0,0,0,.12)"></div>
<div class="t" style="left:321.67px;top:208px;color:#111;transform:scaleX(1.0942);transform-origin:0 0;font-size:13.5px;">Target file override</div>
<div style="position:absolute;left:457px;top:204px;width:232px;height:24px;background:#fff;border:1px solid #8a8074;box-sizing:border-box"></div>
<div style="position:absolute;left:654px;top:204px;width:18px;height:24px;background:linear-gradient(90deg,#f4f2ef,#e6e2dd);border:1px solid #8a8074;box-sizing:border-box"></div>
<div style="position:absolute;left:671px;top:204px;width:18px;height:24px;background:linear-gradient(90deg,#eeebe7,#e9e6e1);border:1px solid #8a8074;box-sizing:border-box"></div>
<svg style="position:absolute;left:659px;top:211px" width="8" height="10" viewBox="0 0 8 10"><path d="M2 1 L6.5 5 L2 9 Z" fill="#000"/></svg>
<svg style="position:absolute;left:676px;top:214px" width="7" height="4" shape-rendering="crispEdges"><rect x="0" y="0" width="7" height="1" fill="#8a8a8a"/><rect x="1" y="1" width="5" height="1" fill="#8a8a8a"/><rect x="2" y="2" width="3" height="1" fill="#8a8a8a"/><rect x="3" y="3" width="1" height="1" fill="#8a8a8a"/></svg>
<div class="t" style="left:299.80px;top:242px;color:#111;transform:scaleX(1.0793);transform-origin:0 0;font-size:13.5px;">Link mode</div>
<div style="position:absolute;left:377px;top:243px;width:13px;height:13px;background:radial-gradient(circle at 35% 35%,#fff,#dcd9d4);border:1px solid #6e665e;border-radius:50%;box-sizing:border-box"></div>
<div class="t" style="left:395.97px;top:242px;color:#111;transform:scaleX(1.1067);transform-origin:0 0;font-size:13.5px;">All static</div>
<div style="position:absolute;left:465px;top:243px;width:13px;height:13px;background:radial-gradient(circle at 40% 40%,#ffa060,#f57a28);border:1px solid #87460f;border-radius:50%;box-sizing:border-box;box-shadow:inset 0 0 0 1px rgba(255,215,175,.55)"></div>
<div style="position:absolute;left:469px;top:247px;width:5px;height:5px;background:#111;border-radius:50%"></div>
<div class="t" style="left:482.90px;top:242px;color:#111;transform:scaleX(1.0586);transform-origin:0 0;font-size:13.5px;">Use shared libs</div>
<div style="position:absolute;left:595px;top:243px;width:13px;height:13px;background:radial-gradient(circle at 35% 35%,#fff,#dcd9d4);border:1px solid #6e665e;border-radius:50%;box-sizing:border-box"></div>
<div class="t" style="left:613.97px;top:242px;color:#111;transform:scaleX(1.0688);transform-origin:0 0;font-size:13.5px;">All shared</div>
<div class="t" style="left:300.34px;top:270px;color:#111;transform:scaleX(1.0735);transform-origin:0 0;font-size:13.5px;">Shared packages postfix</div>
<div style="position:absolute;left:467px;top:266px;width:81px;height:24px;background:#fff;border:1px solid #8a8074;box-sizing:border-box"></div>
<div style="position:absolute;left:562px;top:273px;width:12px;height:12px;background:linear-gradient(135deg,#fff,#e0ddd8);border:1px solid #7a7068;border-radius:1px;box-sizing:border-box;box-shadow:1px 1px 0 rgba(0,0,0,.12)"></div>
<div class="t" style="left:579.26px;top:271px;color:#111;transform:scaleX(1.0735);transform-origin:0 0;font-size:13.5px;">Create a map</div>
<div style="position:absolute;left:300px;top:306px;width:388px;height:41px;border:1px solid #aaa196;border-radius:4px;box-sizing:border-box"></div>
<div style="position:absolute;left:307px;top:300px;width:50px;height:10px;background:#eeebe6"></div>
<div class="t" style="left:308.78px;top:299px;color:#0808f4;transform:scaleX(1.1043);transform-origin:0 0;font-size:13.5px;">Default</div>
<div class="t" style="left:308.79px;top:317px;color:#111;transform:scaleX(1.0916);transform-origin:0 0;font-size:13.5px;">Debug info level</div>
<div style="position:absolute;left:424px;top:313px;width:103px;height:24px;background:#fff;border:1px solid #8a8074;box-sizing:border-box"></div>
<div style="position:absolute;left:509px;top:313px;width:18px;height:24px;background:linear-gradient(90deg,#f4f2ef,#e6e2dd);border:1px solid #8a8074;box-sizing:border-box"></div>
<svg style="position:absolute;left:514px;top:323px" width="7" height="4" shape-rendering="crispEdges"><rect x="0" y="0" width="7" height="1" fill="#000"/><rect x="1" y="1" width="5" height="1" fill="#000"/><rect x="2" y="2" width="3" height="1" fill="#000"/><rect x="3" y="3" width="1" height="1" fill="#000"/></svg>
<div class="t" style="left:427.84px;top:317px;color:#111;transform:scaleX(1.0446);transform-origin:0 0;font-size:13.5px;">None</div>
<div style="position:absolute;left:557px;top:320px;width:12px;height:12px;background:linear-gradient(135deg,#ffb070,#f07020);border:1px solid #9a4a10;border-radius:2px;box-sizing:border-box;box-shadow:1px 1px 0 rgba(0,0,0,.15)"></div>
<svg style="position:absolute;left:558px;top:317px" width="13" height="14" viewBox="0 0 13 14"><path d="M2 8 L5 12 L11.5 1" fill="none" stroke="#000" stroke-width="1.8"/></svg>
<div class="t" style="left:573.90px;top:318px;color:#111;transform:scaleX(0.9971);transform-origin:0 0;font-size:13.5px;">BLITZ</div>
<div style="position:absolute;left:300px;top:360px;width:389px;height:445px;background:#fff;border:1px solid #8a8074;box-sizing:border-box"></div>
<div style="position:absolute;left:302px;top:362px;width:385px;height:20px;background:#f4f2ef"></div>
<div style="position:absolute;left:302px;top:382px;width:385px;height:1px;background:#dcd6ce"></div>
<div style="position:absolute;left:414px;top:362px;width:1px;height:20px;background:#d6d0c8"></div>
<div style="position:absolute;left:414px;top:383px;width:1px;height:75px;background:#aaa298"></div>
<div style="position:absolute;left:550px;top:362px;width:1px;height:20px;background:#d6d0c8"></div>
<div style="position:absolute;left:550px;top:383px;width:1px;height:75px;background:#aaa298"></div>
<div style="position:absolute;left:686px;top:362px;width:1px;height:20px;background:#d6d0c8"></div>
<div style="position:absolute;left:686px;top:383px;width:1px;height:75px;background:#aaa298"></div>
<div style="position:absolute;left:302px;top:408px;width:384px;height:25px;background:#dcdcfa"></div>
<div class="t" style="left:307.87px;top:364px;color:#111;transform:scaleX(1.0201);transform-origin:0 0;font-size:13.5px;">Package</div>
<div class="t" style="left:419.82px;top:364px;color:#111;transform:scaleX(1.0684);transform-origin:0 0;font-size:13.5px;">Debug</div>
<div class="t" style="left:556.79px;top:364px;color:#111;transform:scaleX(1.0950);transform-origin:0 0;font-size:13.5px;">Blitz</div>
<div class="t" style="left:308.39px;top:388px;color:#111;transform:scaleX(1.0682);transform-origin:0 0;font-size:13.5px;">consolapp</div>
<div style="position:absolute;left:421px;top:384px;width:124px;height:23px;background:#fff;border:1px solid #8a8074;box-sizing:border-box"></div>
<div style="position:absolute;left:527px;top:384px;width:18px;height:23px;background:linear-gradient(90deg,#f4f2ef,#e6e2dd);border:1px solid #8a8074;box-sizing:border-box"></div>
<svg style="position:absolute;left:532px;top:394px" width="7" height="4" shape-rendering="crispEdges"><rect x="0" y="0" width="7" height="1" fill="#000"/><rect x="1" y="1" width="5" height="1" fill="#000"/><rect x="2" y="2" width="3" height="1" fill="#000"/><rect x="3" y="3" width="1" height="1" fill="#000"/></svg>
<div style="position:absolute;left:560px;top:390px;width:12px;height:12px;background:linear-gradient(135deg,#ffb070,#f07020);border:1px solid #9a4a10;border-radius:2px;box-sizing:border-box;box-shadow:1px 1px 0 rgba(0,0,0,.15)"></div>
<div style="position:absolute;left:563px;top:395px;width:6px;height:2px;background:#000"></div>
<div class="t" style="left:308.30px;top:413px;color:#111;transform:scaleX(1.0226);transform-origin:0 0;font-size:13.5px;">Core</div>
<div style="position:absolute;left:421px;top:409px;width:124px;height:23px;background:#fff;border:1px solid #8a8074;box-sizing:border-box"></div>
<div style="position:absolute;left:527px;top:409px;width:18px;height:23px;background:linear-gradient(90deg,#f4f2ef,#e6e2dd);border:1px solid #8a8074;box-sizing:border-box"></div>
<svg style="position:absolute;left:532px;top:419px" width="7" height="4" shape-rendering="crispEdges"><rect x="0" y="0" width="7" height="1" fill="#000"/><rect x="1" y="1" width="5" height="1" fill="#000"/><rect x="2" y="2" width="3" height="1" fill="#000"/><rect x="3" y="3" width="1" height="1" fill="#000"/></svg>
<div style="position:absolute;left:560px;top:415px;width:12px;height:12px;background:linear-gradient(135deg,#ffb070,#f07020);border:1px solid #9a4a10;border-radius:2px;box-sizing:border-box;box-shadow:1px 1px 0 rgba(0,0,0,.15)"></div>
<div style="position:absolute;left:563px;top:420px;width:6px;height:2px;background:#000"></div>
<div class="t" style="left:308.04px;top:438px;color:#111;transform:scaleX(1.0982);transform-origin:0 0;font-size:13.5px;">plugin\z</div>
<div style="position:absolute;left:421px;top:434px;width:124px;height:23px;background:#fff;border:1px solid #8a8074;box-sizing:border-box"></div>
<div style="position:absolute;left:527px;top:434px;width:18px;height:23px;background:linear-gradient(90deg,#f4f2ef,#e6e2dd);border:1px solid #8a8074;box-sizing:border-box"></div>
<svg style="position:absolute;left:532px;top:444px" width="7" height="4" shape-rendering="crispEdges"><rect x="0" y="0" width="7" height="1" fill="#000"/><rect x="1" y="1" width="5" height="1" fill="#000"/><rect x="2" y="2" width="3" height="1" fill="#000"/><rect x="3" y="3" width="1" height="1" fill="#000"/></svg>
<div style="position:absolute;left:560px;top:440px;width:12px;height:12px;background:linear-gradient(135deg,#ffb070,#f07020);border:1px solid #9a4a10;border-radius:2px;box-sizing:border-box;box-shadow:1px 1px 0 rgba(0,0,0,.15)"></div>
<div style="position:absolute;left:563px;top:445px;width:6px;height:2px;background:#000"></div>
<div style="position:absolute;left:723px;top:159px;width:389px;height:39px;border:1px solid #aaa196;border-radius:4px;box-sizing:border-box"></div>
<div style="position:absolute;left:730px;top:152px;width:58px;height:10px;background:#eeebe6"></div>
<div class="t" style="left:732.87px;top:152px;color:#0808f4;transform:scaleX(1.0198);transform-origin:0 0;font-size:13.5px;">Release</div>
<div style="position:absolute;left:732px;top:175px;width:13px;height:13px;background:radial-gradient(circle at 40% 40%,#ffa060,#f57a28);border:1px solid #87460f;border-radius:50%;box-sizing:border-box;box-shadow:inset 0 0 0 1px rgba(255,215,175,.55)"></div>
<div style="position:absolute;left:736px;top:179px;width:5px;height:5px;background:#111;border-radius:50%"></div>
<div class="t" style="left:751.30px;top:174px;color:#111;transform:scaleX(1.0996);transform-origin:0 0;font-size:13.5px;">Optimal</div>
<div style="position:absolute;left:815px;top:175px;width:13px;height:13px;background:radial-gradient(circle at 35% 35%,#fff,#dcd9d4);border:1px solid #6e665e;border-radius:50%;box-sizing:border-box"></div>
<div class="t" style="left:833.31px;top:174px;color:#111;transform:scaleX(1.0780);transform-origin:0 0;font-size:13.5px;">Optimize speed</div>
<div style="position:absolute;left:948px;top:175px;width:13px;height:13px;background:radial-gradient(circle at 35% 35%,#fff,#dcd9d4);border:1px solid #6e665e;border-radius:50%;box-sizing:border-box"></div>
<div class="t" style="left:966.31px;top:174px;color:#111;transform:scaleX(1.0756);transform-origin:0 0;font-size:13.5px;">Optimize size</div>
<div style="position:absolute;left:726px;top:210px;width:12px;height:12px;background:linear-gradient(135deg,#ffb070,#f07020);border:1px solid #9a4a10;border-radius:2px;box-sizing:border-box;box-shadow:1px 1px 0 rgba(0,0,0,.15)"></div>
<svg style="position:absolute;left:727px;top:207px" width="13" height="14" viewBox="0 0 13 14"><path d="M2 8 L5 12 L11.5 1" fill="none" stroke="#000" stroke-width="1.8"/></svg>
<div class="t" style="left:744.67px;top:208px;color:#111;transform:scaleX(1.0942);transform-origin:0 0;font-size:13.5px;">Target file override</div>
<div style="position:absolute;left:880px;top:204px;width:232px;height:24px;background:#fff;border:1px solid #8a8074;box-sizing:border-box"></div>
<div class="t" style="left:884.00px;top:208px;color:#111;transform:scaleX(1.0892);transform-origin:0 0;font-size:13.5px;">/home/user/Desktop/pippo</div>
<div style="position:absolute;left:1077px;top:204px;width:18px;height:24px;background:linear-gradient(90deg,#f4f2ef,#e6e2dd);border:1px solid #8a8074;box-sizing:border-box"></div>
<div style="position:absolute;left:1094px;top:204px;width:18px;height:24px;background:linear-gradient(90deg,#f4f2ef,#e6e2dd);border:1px solid #8a8074;box-sizing:border-box"></div>
<svg style="position:absolute;left:1082px;top:211px" width="8" height="10" viewBox="0 0 8 10"><path d="M2 1 L6.5 5 L2 9 Z" fill="#000"/></svg>
<svg style="position:absolute;left:1099px;top:214px" width="7" height="4" shape-rendering="crispEdges"><rect x="0" y="0" width="7" height="1" fill="#000"/><rect x="1" y="1" width="5" height="1" fill="#000"/><rect x="2" y="2" width="3" height="1" fill="#000"/><rect x="3" y="3" width="1" height="1" fill="#000"/></svg>
<div class="t" style="left:722.80px;top:242px;color:#111;transform:scaleX(1.0793);transform-origin:0 0;font-size:13.5px;">Link mode</div>
<div style="position:absolute;left:800px;top:243px;width:13px;height:13px;background:radial-gradient(circle at 40% 40%,#ffa060,#f57a28);border:1px solid #87460f;border-radius:50%;box-sizing:border-box;box-shadow:inset 0 0 0 1px rgba(255,215,175,.55)"></div>
<div style="position:absolute;left:804px;top:247px;width:5px;height:5px;background:#111;border-radius:50%"></div>
<div class="t" style="left:818.97px;top:242px;color:#111;transform:scaleX(1.1067);transform-origin:0 0;font-size:13.5px;">All static</div>
<div style="position:absolute;left:888px;top:243px;width:13px;height:13px;background:radial-gradient(circle at 35% 35%,#fff,#dcd9d4);border:1px solid #6e665e;border-radius:50%;box-sizing:border-box"></div>
<div class="t" style="left:905.90px;top:242px;color:#111;transform:scaleX(1.0586);transform-origin:0 0;font-size:13.5px;">Use shared libs</div>
<div style="position:absolute;left:1018px;top:243px;width:13px;height:13px;background:radial-gradient(circle at 35% 35%,#fff,#dcd9d4);border:1px solid #6e665e;border-radius:50%;box-sizing:border-box"></div>
<div class="t" style="left:1036.97px;top:242px;color:#111;transform:scaleX(1.0688);transform-origin:0 0;font-size:13.5px;">All shared</div>
<div class="t" style="left:723.34px;top:270px;color:#111;transform:scaleX(1.0735);transform-origin:0 0;font-size:13.5px;">Shared packages postfix</div>
<div style="position:absolute;left:890px;top:266px;width:81px;height:24px;background:#fff;border:1px solid #8a8074;box-sizing:border-box"></div>
<div style="position:absolute;left:985px;top:273px;width:12px;height:12px;background:linear-gradient(135deg,#fff,#e0ddd8);border:1px solid #7a7068;border-radius:1px;box-sizing:border-box;box-shadow:1px 1px 0 rgba(0,0,0,.12)"></div>
<div class="t" style="left:1002.26px;top:271px;color:#111;transform:scaleX(1.0735);transform-origin:0 0;font-size:13.5px;">Create a map</div>
<div style="position:absolute;left:723px;top:306px;width:388px;height:41px;border:1px solid #aaa196;border-radius:4px;box-sizing:border-box"></div>
<div style="position:absolute;left:730px;top:300px;width:50px;height:10px;background:#eeebe6"></div>
<div class="t" style="left:731.78px;top:299px;color:#0808f4;transform:scaleX(1.1043);transform-origin:0 0;font-size:13.5px;">Default</div>
<div class="t" style="left:731.79px;top:317px;color:#111;transform:scaleX(1.0916);transform-origin:0 0;font-size:13.5px;">Debug info level</div>
<div style="position:absolute;left:847px;top:313px;width:103px;height:24px;background:#fff;border:1px solid #8a8074;box-sizing:border-box"></div>
<div style="position:absolute;left:932px;top:313px;width:18px;height:24px;background:linear-gradient(90deg,#f4f2ef,#e6e2dd);border:1px solid #8a8074;box-sizing:border-box"></div>
<svg style="position:absolute;left:937px;top:323px" width="7" height="4" shape-rendering="crispEdges"><rect x="0" y="0" width="7" height="1" fill="#000"/><rect x="1" y="1" width="5" height="1" fill="#000"/><rect x="2" y="2" width="3" height="1" fill="#000"/><rect x="3" y="3" width="1" height="1" fill="#000"/></svg>
<div class="t" style="left:850.84px;top:317px;color:#111;transform:scaleX(1.0446);transform-origin:0 0;font-size:13.5px;">None</div>
<div style="position:absolute;left:980px;top:320px;width:12px;height:12px;background:linear-gradient(135deg,#fff,#e0ddd8);border:1px solid #7a7068;border-radius:1px;box-sizing:border-box;box-shadow:1px 1px 0 rgba(0,0,0,.12)"></div>
<div class="t" style="left:996.90px;top:318px;color:#111;transform:scaleX(0.9971);transform-origin:0 0;font-size:13.5px;">BLITZ</div>
<div style="position:absolute;left:723px;top:360px;width:389px;height:445px;background:#fff;border:1px solid #8a8074;box-sizing:border-box"></div>
<div style="position:absolute;left:725px;top:362px;width:385px;height:20px;background:#f4f2ef"></div>
<div style="position:absolute;left:725px;top:382px;width:385px;height:1px;background:#dcd6ce"></div>
<div style="position:absolute;left:837px;top:362px;width:1px;height:20px;background:#d6d0c8"></div>
<div style="position:absolute;left:837px;top:383px;width:1px;height:75px;background:#aaa298"></div>
<div style="position:absolute;left:973px;top:362px;width:1px;height:20px;background:#d6d0c8"></div>
<div style="position:absolute;left:973px;top:383px;width:1px;height:75px;background:#aaa298"></div>
<div style="position:absolute;left:1109px;top:362px;width:1px;height:20px;background:#d6d0c8"></div>
<div style="position:absolute;left:1109px;top:383px;width:1px;height:75px;background:#aaa298"></div>
<div style="position:absolute;left:725px;top:408px;width:384px;height:25px;background:#dcdcfa"></div>
<div class="t" style="left:730.87px;top:364px;color:#111;transform:scaleX(1.0201);transform-origin:0 0;font-size:13.5px;">Package</div>
<div class="t" style="left:842.82px;top:364px;color:#111;transform:scaleX(1.0684);transform-origin:0 0;font-size:13.5px;">Debug</div>
<div class="t" style="left:979.79px;top:364px;color:#111;transform:scaleX(1.0950);transform-origin:0 0;font-size:13.5px;">Blitz</div>
<div class="t" style="left:731.39px;top:388px;color:#111;transform:scaleX(1.0682);transform-origin:0 0;font-size:13.5px;">consolapp</div>
<div style="position:absolute;left:844px;top:384px;width:124px;height:23px;background:#fff;border:1px solid #8a8074;box-sizing:border-box"></div>
<div style="position:absolute;left:950px;top:384px;width:18px;height:23px;background:linear-gradient(90deg,#f4f2ef,#e6e2dd);border:1px solid #8a8074;box-sizing:border-box"></div>
<svg style="position:absolute;left:955px;top:394px" width="7" height="4" shape-rendering="crispEdges"><rect x="0" y="0" width="7" height="1" fill="#000"/><rect x="1" y="1" width="5" height="1" fill="#000"/><rect x="2" y="2" width="3" height="1" fill="#000"/><rect x="3" y="3" width="1" height="1" fill="#000"/></svg>
<div style="position:absolute;left:983px;top:390px;width:12px;height:12px;background:linear-gradient(135deg,#ffb070,#f07020);border:1px solid #9a4a10;border-radius:2px;box-sizing:border-box;box-shadow:1px 1px 0 rgba(0,0,0,.15)"></div>
<div style="position:absolute;left:986px;top:395px;width:6px;height:2px;background:#000"></div>
<div class="t" style="left:731.30px;top:413px;color:#111;transform:scaleX(1.0226);transform-origin:0 0;font-size:13.5px;">Core</div>
<div style="position:absolute;left:844px;top:409px;width:124px;height:23px;background:#fff;border:1px solid #8a8074;box-sizing:border-box"></div>
<div style="position:absolute;left:950px;top:409px;width:18px;height:23px;background:linear-gradient(90deg,#f4f2ef,#e6e2dd);border:1px solid #8a8074;box-sizing:border-box"></div>
<svg style="position:absolute;left:955px;top:419px" width="7" height="4" shape-rendering="crispEdges"><rect x="0" y="0" width="7" height="1" fill="#000"/><rect x="1" y="1" width="5" height="1" fill="#000"/><rect x="2" y="2" width="3" height="1" fill="#000"/><rect x="3" y="3" width="1" height="1" fill="#000"/></svg>
<div style="position:absolute;left:983px;top:415px;width:12px;height:12px;background:linear-gradient(135deg,#ffb070,#f07020);border:1px solid #9a4a10;border-radius:2px;box-sizing:border-box;box-shadow:1px 1px 0 rgba(0,0,0,.15)"></div>
<div style="position:absolute;left:986px;top:420px;width:6px;height:2px;background:#000"></div>
<div class="t" style="left:731.04px;top:438px;color:#111;transform:scaleX(1.0982);transform-origin:0 0;font-size:13.5px;">plugin\z</div>
<div style="position:absolute;left:844px;top:434px;width:124px;height:23px;background:#fff;border:1px solid #8a8074;box-sizing:border-box"></div>
<div style="position:absolute;left:950px;top:434px;width:18px;height:23px;background:linear-gradient(90deg,#f4f2ef,#e6e2dd);border:1px solid #8a8074;box-sizing:border-box"></div>
<svg style="position:absolute;left:955px;top:444px" width="7" height="4" shape-rendering="crispEdges"><rect x="0" y="0" width="7" height="1" fill="#000"/><rect x="1" y="1" width="5" height="1" fill="#000"/><rect x="2" y="2" width="3" height="1" fill="#000"/><rect x="3" y="3" width="1" height="1" fill="#000"/></svg>
<div style="position:absolute;left:983px;top:440px;width:12px;height:12px;background:linear-gradient(135deg,#ffb070,#f07020);border:1px solid #9a4a10;border-radius:2px;box-sizing:border-box;box-shadow:1px 1px 0 rgba(0,0,0,.15)"></div>
<div style="position:absolute;left:986px;top:445px;width:6px;height:2px;background:#000"></div>
<div style="position:absolute;left:958px;top:818px;width:84px;height:26px;background:linear-gradient(#f6f5f3 0%,#efedea 45%,#e5e1dc 55%,#ebe8e4 100%);border:1px solid #6e655c;border-radius:4px;box-sizing:border-box"></div>
<svg style="position:absolute;left:979px;top:821px" width="20" height="20" viewBox="0 0 20 20"><defs><linearGradient id="gok" x1="0" y1="0" x2="0" y2="1"><stop offset="0" stop-color="#b4e488"/><stop offset=".55" stop-color="#8fd455"/><stop offset=".6" stop-color="#6cc61c"/><stop offset="1" stop-color="#5cb810"/></linearGradient></defs><path d="M13.5 1.5 H18.5 V13.5 Q18.5 15 17 15 H7.5 V18.5 L1 11.5 L7.5 4.5 V8 H13.5 Z" fill="url(#gok)" stroke="#55a818" stroke-width="0.9" stroke-linejoin="round"/></svg>
<div class="t" style="left:1003.39px;top:823px;color:#111;transform:scaleX(0.9575);transform-origin:0 0;font-size:13.5px;">OK</div>
<div style="position:absolute;left:1050px;top:818px;width:84px;height:26px;background:linear-gradient(#f6f5f3 0%,#efedea 45%,#e5e1dc 55%,#ebe8e4 100%);border:1px solid #6e655c;border-radius:4px;box-sizing:border-box"></div>
<svg style="position:absolute;left:1058px;top:818px" width="24" height="26" viewBox="0 0 24 26"><ellipse cx="11" cy="21" rx="7" ry="1.5" fill="#000" opacity=".12"/><path d="M6.3 4 L15.2 19 M16.8 5 L5.2 18" stroke="#c80818" stroke-width="6" stroke-linecap="butt"/><path d="M6.8 4.8 L14.7 18.2 M16.1 5.7 L5.9 17.3" stroke="#f27070" stroke-width="4" stroke-linecap="butt"/></svg>
<div class="t" style="left:1082.29px;top:823px;color:#111;transform:scaleX(1.0420);transform-origin:0 0;font-size:13.5px;">Cancel</div>
</body></html>
